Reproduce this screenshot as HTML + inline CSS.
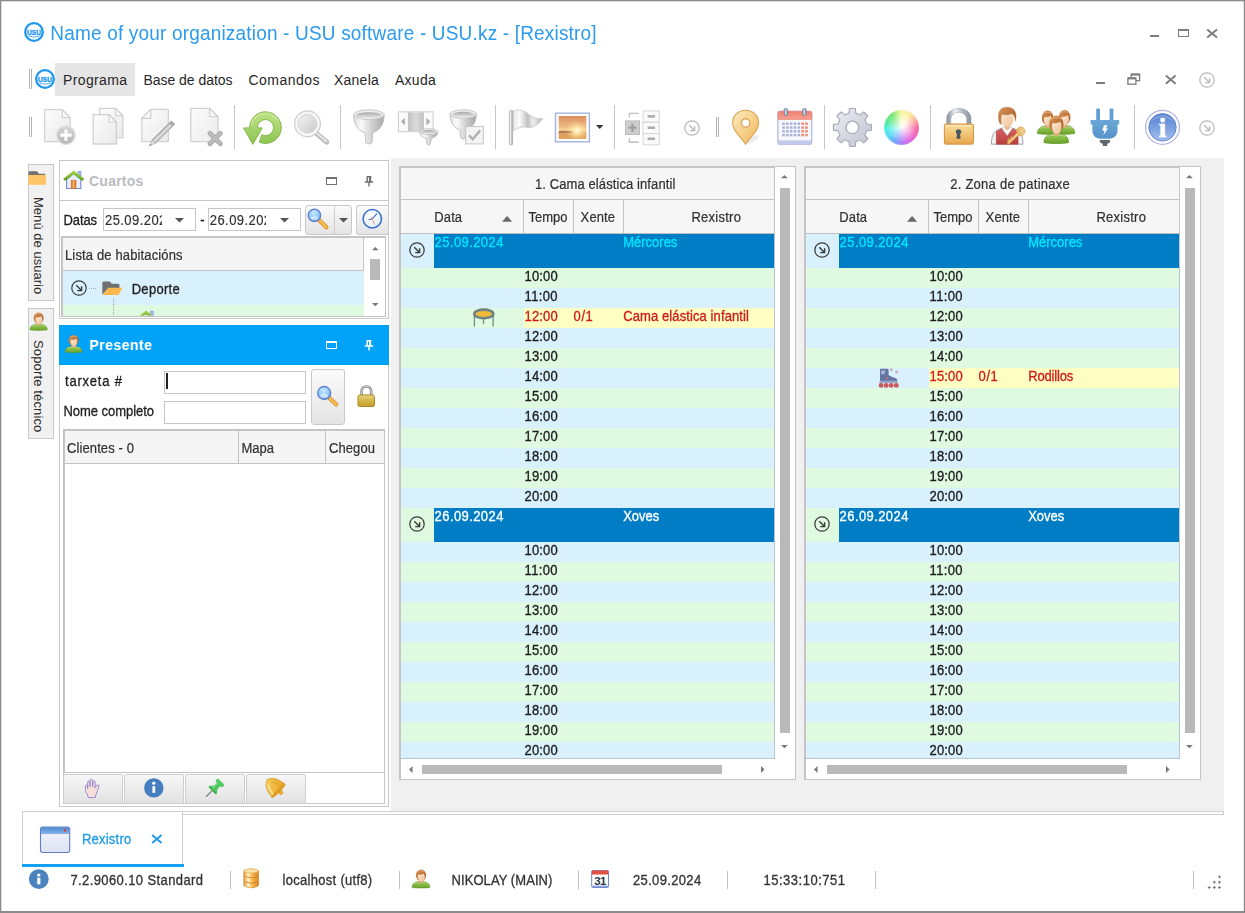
<!DOCTYPE html>
<html><head><meta charset="utf-8"><title>Rexistro</title>
<style>
html,body{margin:0;padding:0;background:#fff;overflow:hidden}
body{width:1245px;height:913px;position:relative;font-family:"Liberation Sans",sans-serif;font-size:13px}
#frame{position:absolute;left:0;top:0;width:1245px;height:913px;box-sizing:border-box;border:1px solid #8b8b8b;border-bottom-width:2px;box-shadow:inset 1px 1px 0 rgba(0,0,0,0.13),inset -1px 0 0 rgba(0,0,0,0.10);pointer-events:none}
svg{overflow:visible;display:block}
</style></head><body>
<div style="position:absolute;left:391px;top:158px;width:833px;height:653px;background:#f0f0f0"></div>
<svg style="position:absolute;left:23.799999999999997px;top:22.0px" width="20" height="20" viewBox="0 0 20 20"><circle cx="10" cy="10" r="8.8" fill="#fff" stroke="#1f97ef" stroke-width="2.3"/><text x="3.1" y="12.6" font-family="Liberation Sans" font-weight="bold" font-size="6.4" textLength="13.8" lengthAdjust="spacingAndGlyphs" fill="#1f97ef" stroke="#1f97ef" stroke-width="0.35">USU</text><path d="M4.4 14 Q10 16.4 15.6 14" stroke="#1f97ef" stroke-width="0.9" fill="none" opacity="0.85"/></svg>
<span id="title" style="position:absolute;left:50.3px;top:24.02px;font-size:19px;line-height:19px;color:#2a9bee;white-space:pre;letter-spacing:0.180px;transform:scaleY(1.09);transform-origin:0 84.65%;">Name of your organization - USU software - USU.kz - [Rexistro]</span>
<div style="position:absolute;left:1150px;top:35px;width:9px;height:2px;background:#7d7d7d"></div>
<div style="position:absolute;left:1177.5px;top:28.6px;width:9px;height:5px;border:1.3px solid #7d7d7d;border-top-width:2.6px"></div>
<svg style="position:absolute;left:1206px;top:28px" width="12" height="11" viewBox="0 0 12 11"><path d="M1.2 1.6 L11 9.6 M11 1.6 L1.2 9.6" stroke="#7d7d7d" stroke-width="2"/></svg>
<div style="position:absolute;left:1096px;top:82px;width:9px;height:2px;background:#7d7d7d"></div>
<svg style="position:absolute;left:1127px;top:73px" width="14" height="13" viewBox="0 0 14 13"><path d="M4.2 4.5 V1.2 H12.6 V7.6 H9" fill="none" stroke="#7d7d7d" stroke-width="1.3"/><path d="M4.2 1.6 H12.6" stroke="#7d7d7d" stroke-width="2"/><rect x="0.9" y="5" width="8" height="6.2" fill="#fff" stroke="#7d7d7d" stroke-width="1.3"/><path d="M0.9 5.4 H8.9" stroke="#7d7d7d" stroke-width="2"/></svg>
<svg style="position:absolute;left:1165px;top:74px" width="12" height="11" viewBox="0 0 12 11"><path d="M0.8 1.6 L10.6 9.8 M10.6 1.6 L0.8 9.8" stroke="#7d7d7d" stroke-width="1.9"/></svg>
<svg style="position:absolute;left:1199.0px;top:71.5px" width="16" height="16" viewBox="0 0 16 16"><circle cx="8" cy="8" r="7.2" fill="none" stroke="#b9b9b9" stroke-width="1.2"/><path d="M5.3 5.3 L10.2 10.2 M10.6 6.2 V10.6 H6.2" fill="none" stroke="#b9b9b9" stroke-width="1.4"/></svg>
<div style="position:absolute;left:29px;top:69px;width:1px;height:20px;background:#b4b4b4"></div><div style="position:absolute;left:31px;top:69px;width:1px;height:20px;background:#b4b4b4"></div>
<svg style="position:absolute;left:35.0px;top:69.0px" width="20" height="20" viewBox="0 0 20 20"><circle cx="10" cy="10" r="8.8" fill="#fff" stroke="#1f97ef" stroke-width="2.3"/><text x="3.1" y="12.6" font-family="Liberation Sans" font-weight="bold" font-size="6.4" textLength="13.8" lengthAdjust="spacingAndGlyphs" fill="#1f97ef" stroke="#1f97ef" stroke-width="0.35">USU</text><path d="M4.4 14 Q10 16.4 15.6 14" stroke="#1f97ef" stroke-width="0.9" fill="none" opacity="0.85"/></svg>
<div style="position:absolute;left:55px;top:63px;width:80px;height:33px;background:#e5e5e5"></div>
<span id="menu0" style="position:absolute;left:63.0px;top:72.75px;font-size:14px;line-height:14px;color:#262626;white-space:pre;letter-spacing:0.366px;">Programa</span>
<span id="menu1" style="position:absolute;left:143.5px;top:72.75px;font-size:14px;line-height:14px;color:#262626;white-space:pre;letter-spacing:-0.040px;">Base de datos</span>
<span id="menu2" style="position:absolute;left:248.5px;top:72.75px;font-size:14px;line-height:14px;color:#262626;white-space:pre;letter-spacing:0.475px;">Comandos</span>
<span id="menu3" style="position:absolute;left:334.0px;top:72.75px;font-size:14px;line-height:14px;color:#262626;white-space:pre;letter-spacing:0.234px;">Xanela</span>
<span id="menu4" style="position:absolute;left:395.0px;top:72.75px;font-size:14px;line-height:14px;color:#262626;white-space:pre;letter-spacing:0.259px;">Axuda</span>
<div style="position:absolute;left:29px;top:117px;width:1px;height:20px;background:#b4b4b4"></div><div style="position:absolute;left:31px;top:117px;width:1px;height:20px;background:#b4b4b4"></div>
<div style="position:absolute;left:234px;top:105px;width:1px;height:44px;background:#c6c6c6"></div>
<div style="position:absolute;left:340px;top:105px;width:1px;height:44px;background:#c6c6c6"></div>
<div style="position:absolute;left:495px;top:105px;width:1px;height:44px;background:#c6c6c6"></div>
<div style="position:absolute;left:614px;top:105px;width:1px;height:44px;background:#c6c6c6"></div>
<div style="position:absolute;left:824px;top:105px;width:1px;height:44px;background:#c6c6c6"></div>
<div style="position:absolute;left:930px;top:105px;width:1px;height:44px;background:#c6c6c6"></div>
<div style="position:absolute;left:1134px;top:105px;width:1px;height:44px;background:#c6c6c6"></div>
<svg style="position:absolute;left:683.5px;top:119.5px" width="16" height="16" viewBox="0 0 16 16"><circle cx="8" cy="8" r="7.2" fill="none" stroke="#b9b9b9" stroke-width="1.2"/><path d="M5.3 5.3 L10.2 10.2 M10.6 6.2 V10.6 H6.2" fill="none" stroke="#b9b9b9" stroke-width="1.4"/></svg>
<div style="position:absolute;left:716px;top:117px;width:1px;height:20px;background:#b4b4b4"></div><div style="position:absolute;left:718px;top:117px;width:1px;height:20px;background:#b4b4b4"></div>
<svg style="position:absolute;left:1199.0px;top:119.5px" width="16" height="16" viewBox="0 0 16 16"><circle cx="8" cy="8" r="7.2" fill="none" stroke="#b9b9b9" stroke-width="1.2"/><path d="M5.3 5.3 L10.2 10.2 M10.6 6.2 V10.6 H6.2" fill="none" stroke="#b9b9b9" stroke-width="1.4"/></svg>
<svg style="position:absolute;left:596px;top:125px" width="8" height="4" viewBox="0 0 8 4"><path d="M0 0 H7.4 L3.7 4 Z" fill="#333"/></svg>
<div style="position:absolute;left:28px;top:164px;width:26px;height:137px;border:1px solid #c9c9c9;background:#f1f1f1;box-sizing:border-box"></div>
<div style="position:absolute;left:28px;top:308px;width:26px;height:131px;border:1px solid #c9c9c9;background:#f1f1f1;box-sizing:border-box"></div>
<span id="vt0" style="position:absolute;left:31.1px;top:197.4px;width:15px;writing-mode:vertical-rl;font-size:13px;line-height:15px;color:#2b2b2b;white-space:pre;letter-spacing:0.030px;">Menú de usuario</span>
<span id="vt1" style="position:absolute;left:31.1px;top:340.3px;width:15px;writing-mode:vertical-rl;font-size:13px;line-height:15px;color:#2b2b2b;white-space:pre;letter-spacing:0.144px;">Soporte técnico</span>
<div style="position:absolute;left:59px;top:160px;width:330px;height:159px;border:1px solid #c8c8c8;background:#fff;box-sizing:border-box"></div>
<div style="position:absolute;left:60px;top:200px;width:328px;height:1px;background:#c8c8c8"></div>
<span id="cuartos" style="position:absolute;left:89.0px;top:174.35px;font-size:14px;line-height:14px;color:#b9bcc2;white-space:pre;font-weight:bold;letter-spacing:0.242px;">Cuartos</span>
<div style="position:absolute;left:326px;top:176.5px;width:9px;height:5px;border:1.3px solid #707070;border-top-width:2.4px"></div>
<svg style="position:absolute;left:363.5px;top:175.5px" width="10" height="11" viewBox="0 0 10 11"><path d="M2.6 0.7 H7.4 M3.2 0.7 V5.6 M6.4 0.7 V5.6 M0.8 6 H9.2 M5 6 V10.6" stroke="#707070" stroke-width="1.4" fill="none"/><rect x="5" y="1" width="1.6" height="4.6" fill="#707070"/></svg>
<span id="datas" style="position:absolute;left:63.5px;top:214.40px;font-size:13px;line-height:13px;color:#1f1f1f;white-space:pre;letter-spacing:-0.094px;transform:scaleY(1.07);transform-origin:0 84.65%;-webkit-text-stroke:0.3px #1f1f1f;">Datas</span>
<div style="position:absolute;left:103px;top:208px;width:93px;height:23px;border:1px solid #c6c6c6;background:#fff;box-sizing:border-box;overflow:hidden"><div style="position:absolute;left:0;top:0;width:57.5px;height:21px;overflow:hidden"><span id="d1" style="position:absolute;left:1.0px;top:5.00px;font-size:13px;line-height:13px;color:#303030;white-space:pre;letter-spacing:0.432px;transform:scaleY(1.07);transform-origin:0 84.65%;-webkit-text-stroke:0.15px #303030;">25.09.2024</span></div></div>
<svg style="position:absolute;left:175px;top:218px" width="9" height="4.5" viewBox="0 0 9 4.5"><path d="M0 0 H9 L4.5 4.5 Z" fill="#555"/></svg>
<span id="t11" style="position:absolute;left:200.3px;top:214.00px;font-size:13px;line-height:13px;color:#1f1f1f;white-space:pre;transform:scaleY(1.07);transform-origin:0 84.65%;-webkit-text-stroke:0.3px #1f1f1f;">-</span>
<div style="position:absolute;left:208px;top:208px;width:93px;height:23px;border:1px solid #c6c6c6;background:#fff;box-sizing:border-box;overflow:hidden"><div style="position:absolute;left:0;top:0;width:56.8px;height:21px;overflow:hidden"><span id="d2" style="position:absolute;left:0.8px;top:5.00px;font-size:13px;line-height:13px;color:#303030;white-space:pre;letter-spacing:0.432px;transform:scaleY(1.07);transform-origin:0 84.65%;-webkit-text-stroke:0.15px #303030;">26.09.2024</span></div></div>
<svg style="position:absolute;left:280px;top:218px" width="9" height="4.5" viewBox="0 0 9 4.5"><path d="M0 0 H9 L4.5 4.5 Z" fill="#555"/></svg>
<div style="position:absolute;left:304.5px;top:204.5px;width:47px;height:30.5px;border:1px solid #c9c9c9;border-radius:3px;background:linear-gradient(#fafafa,#e4e4e4);box-sizing:border-box"></div>
<div style="position:absolute;left:333.5px;top:205.5px;width:1px;height:28.5px;background:#cdcdcd"></div>
<svg style="position:absolute;left:338.5px;top:218px" width="9" height="4.5" viewBox="0 0 9 4.5"><path d="M0 0 H9 L4.5 4.5 Z" fill="#555"/></svg>
<div style="position:absolute;left:355.5px;top:204.5px;width:32px;height:30.5px;border:1px solid #c9c9c9;border-radius:3px;background:linear-gradient(#fafafa,#e4e4e4);box-sizing:border-box;border-right:none;border-radius:3px 0 0 3px"></div>
<div style="position:absolute;left:61px;top:236px;width:325px;height:80.5px;border:2px solid #c4c4c4;border-right-width:1px;border-bottom-width:1px;background:#fff;box-sizing:border-box"></div>
<div style="position:absolute;left:63px;top:238px;width:301px;height:33px;background:#f5f5f5;border-bottom:1px solid #c4c4c4;border-right:1px solid #c4c4c4;box-sizing:border-box"></div>
<span id="lista" style="position:absolute;left:65.0px;top:249.10px;font-size:13px;line-height:13px;color:#303030;white-space:pre;letter-spacing:0.139px;transform:scaleY(1.07);transform-origin:0 84.65%;-webkit-text-stroke:0.2px #303030;">Lista de habitacións</span>
<div style="position:absolute;left:63px;top:271px;width:301px;height:34px;background:#d9f0fd"></div>
<div style="position:absolute;left:63px;top:305px;width:301px;height:10.5px;background:#e0fae2"></div>
<svg style="position:absolute;left:71.2px;top:280.0px" width="16" height="16" viewBox="0 0 16 16"><circle cx="8" cy="8" r="7.2" fill="none" stroke="#3c3c3c" stroke-width="1.2"/><path d="M5.3 5.3 L10.2 10.2 M10.6 6.2 V10.6 H6.2" fill="none" stroke="#3c3c3c" stroke-width="1.4"/></svg>
<div style="position:absolute;left:89px;top:288px;width:8px;height:1px;background:repeating-linear-gradient(90deg,#b0b0b0 0 1px,transparent 1px 2px)"></div>
<div style="position:absolute;left:113px;top:298px;width:1px;height:18px;background:repeating-linear-gradient(#a8a8a8 0 1px,transparent 1px 2px)"></div>
<span id="deporte" style="position:absolute;left:131.7px;top:282.90px;font-size:13px;line-height:13px;color:#1f1f1f;white-space:pre;letter-spacing:0.293px;transform:scaleY(1.07);transform-origin:0 84.65%;-webkit-text-stroke:0.3px #1f1f1f;">Deporte</span>
<svg style="position:absolute;left:371.7px;top:247px" width="6.6" height="3.3" viewBox="0 0 6.6 3.3"><path d="M0 3.3 H6.6 L3.3 0 Z" fill="#777"/></svg>
<div style="position:absolute;left:370px;top:259px;width:10px;height:21px;background:#b9b9b9"></div>
<svg style="position:absolute;left:371.7px;top:302.8px" width="6.6" height="3.3" viewBox="0 0 6.6 3.3"><path d="M0 0 H6.6 L3.3 3.3 Z" fill="#777"/></svg>
<div style="position:absolute;left:59px;top:325px;width:330px;height:482px;border:1px solid #c8c8c8;border-top:none;background:#fff;box-sizing:border-box"></div>
<div style="position:absolute;left:59px;top:325px;width:330px;height:40px;background:#00a3f7"></div>
<span id="presente" style="position:absolute;left:89.3px;top:338.15px;font-size:14px;line-height:14px;color:#ffffff;white-space:pre;font-weight:bold;letter-spacing:0.480px;">Presente</span>
<div style="position:absolute;left:326px;top:341px;width:9px;height:5px;border:1.3px solid #fff;border-top-width:2.4px"></div>
<svg style="position:absolute;left:363.5px;top:339.8px" width="10" height="11" viewBox="0 0 10 11"><path d="M2.6 0.7 H7.4 M3.2 0.7 V5.6 M6.4 0.7 V5.6 M0.8 6 H9.2 M5 6 V10.6" stroke="#fff" stroke-width="1.4" fill="none"/><rect x="5" y="1" width="1.6" height="4.6" fill="#fff"/></svg>
<span id="tarx" style="position:absolute;left:65.0px;top:374.80px;font-size:13px;line-height:13px;color:#1f1f1f;white-space:pre;letter-spacing:0.790px;transform:scaleY(1.07);transform-origin:0 84.65%;-webkit-text-stroke:0.3px #1f1f1f;">tarxeta #</span>
<span id="nome" style="position:absolute;left:63.5px;top:405.00px;font-size:13px;line-height:13px;color:#1f1f1f;white-space:pre;letter-spacing:-0.042px;transform:scaleY(1.07);transform-origin:0 84.65%;-webkit-text-stroke:0.3px #1f1f1f;">Nome completo</span>
<div style="position:absolute;left:164px;top:370.5px;width:142px;height:23px;border:1px solid #c6c6c6;background:#fff;box-sizing:border-box"></div>
<div style="position:absolute;left:164px;top:400.5px;width:142px;height:23px;border:1px solid #c6c6c6;background:#fff;box-sizing:border-box"></div>
<div style="position:absolute;left:166.3px;top:373px;width:1.4px;height:16px;background:#222"></div>
<div style="position:absolute;left:310.5px;top:368.5px;width:34.5px;height:56.5px;border:1px solid #c9c9c9;border-radius:3px;background:linear-gradient(#fafafa,#e4e4e4);box-sizing:border-box"></div>
<div style="position:absolute;left:63px;top:429px;width:322px;height:344px;border:2px solid #c4c4c4;border-right-width:1px;border-bottom-width:1px;background:#fff;box-sizing:border-box"></div>
<div style="position:absolute;left:65px;top:431px;width:319px;height:33px;background:#f5f5f5;border-bottom:1px solid #c4c4c4;box-sizing:border-box"></div>
<div style="position:absolute;left:238px;top:431px;width:1px;height:33px;background:#c4c4c4"></div>
<div style="position:absolute;left:325px;top:431px;width:1px;height:33px;background:#c4c4c4"></div>
<span id="cli" style="position:absolute;left:67.0px;top:441.70px;font-size:13px;line-height:13px;color:#303030;white-space:pre;letter-spacing:0.104px;transform:scaleY(1.07);transform-origin:0 84.65%;-webkit-text-stroke:0.2px #303030;">Clientes - 0</span>
<span id="mapa" style="position:absolute;left:241.4px;top:441.70px;font-size:13px;line-height:13px;color:#303030;white-space:pre;letter-spacing:0.017px;transform:scaleY(1.07);transform-origin:0 84.65%;-webkit-text-stroke:0.2px #303030;">Mapa</span>
<span id="cheg" style="position:absolute;left:329.0px;top:441.70px;font-size:13px;line-height:13px;color:#303030;white-space:pre;letter-spacing:0.076px;transform:scaleY(1.07);transform-origin:0 84.65%;-webkit-text-stroke:0.2px #303030;">Chegou</span>
<div style="position:absolute;left:63px;top:773px;width:322px;height:31px;border:1px solid #c8c8c8;border-top:none;background:#fff;box-sizing:border-box"></div>
<div style="position:absolute;left:63px;top:773.5px;width:60px;height:30px;border:1px solid #cfcfcf;border-radius:2px;background:linear-gradient(#f6f6f6,#e2e2e2);box-sizing:border-box"></div>
<div style="position:absolute;left:124px;top:773.5px;width:60px;height:30px;border:1px solid #cfcfcf;border-radius:2px;background:linear-gradient(#f6f6f6,#e2e2e2);box-sizing:border-box"></div>
<div style="position:absolute;left:185px;top:773.5px;width:60px;height:30px;border:1px solid #cfcfcf;border-radius:2px;background:linear-gradient(#f6f6f6,#e2e2e2);box-sizing:border-box"></div>
<div style="position:absolute;left:246px;top:773.5px;width:60px;height:30px;border:1px solid #cfcfcf;border-radius:2px;background:linear-gradient(#f6f6f6,#e2e2e2);box-sizing:border-box"></div>
<div style="position:absolute;left:399px;top:166px;width:397px;height:614px;border:1px solid #c4c4c4;border-left-width:2px;background:#fff;box-sizing:border-box"></div>
<div style="position:absolute;left:401px;top:167px;width:374px;height:1px;background:#c4c4c4"></div>
<div style="position:absolute;left:401px;top:168px;width:374px;height:66px;background:#f6f6f6;border-right:1px solid #c4c4c4;border-bottom:1px solid #bdbdbd;box-sizing:border-box"></div>
<div style="position:absolute;left:401px;top:199px;width:373px;height:1px;background:#c4c4c4"></div>
<div style="position:absolute;left:523px;top:200px;width:1px;height:33px;background:#c4c4c4"></div>
<div style="position:absolute;left:573px;top:200px;width:1px;height:33px;background:#c4c4c4"></div>
<div style="position:absolute;left:623px;top:200px;width:1px;height:33px;background:#c4c4c4"></div>
<span id="aband" style="position:absolute;left:535.0px;top:177.70px;font-size:13px;line-height:13px;color:#303030;white-space:pre;letter-spacing:0.095px;transform:scaleY(1.07);transform-origin:0 84.65%;-webkit-text-stroke:0.2px #303030;">1. Cama elástica infantil</span>
<span id="ah0" style="position:absolute;left:434.3px;top:211.40px;font-size:13px;line-height:13px;color:#303030;white-space:pre;letter-spacing:0.108px;transform:scaleY(1.07);transform-origin:0 84.65%;-webkit-text-stroke:0.2px #303030;">Data</span>
<svg style="position:absolute;left:501.7px;top:215.8px" width="10.2" height="5.8" viewBox="0 0 10.2 5.8"><path d="M0 5.8 H10.2 L5.1 0 Z" fill="#6a6a6a"/></svg>
<span id="ah1" style="position:absolute;left:528.5px;top:211.40px;font-size:13px;line-height:13px;color:#303030;white-space:pre;letter-spacing:-0.026px;transform:scaleY(1.07);transform-origin:0 84.65%;-webkit-text-stroke:0.2px #303030;">Tempo</span>
<span id="ah2" style="position:absolute;left:580.6px;top:211.40px;font-size:13px;line-height:13px;color:#303030;white-space:pre;letter-spacing:0.123px;transform:scaleY(1.07);transform-origin:0 84.65%;-webkit-text-stroke:0.2px #303030;">Xente</span>
<span id="ah3" style="position:absolute;left:691.4px;top:211.40px;font-size:13px;line-height:13px;color:#303030;white-space:pre;letter-spacing:0.264px;transform:scaleY(1.07);transform-origin:0 84.65%;-webkit-text-stroke:0.2px #303030;">Rexistro</span>
<div style="position:absolute;left:401px;top:233.6px;width:373px;height:524.6px;overflow:hidden;border-right:1px solid #b9c6cf;border-bottom:1px solid #b9c6cf"><div style="position:absolute;left:0px;top:0px;width:373px;height:34px;background:#d9f0fd"></div><div style="position:absolute;left:33px;top:0px;width:340px;height:34px;background:#007dc5"></div><svg style="position:absolute;left:8.2px;top:8.7px" width="16" height="16" viewBox="0 0 16 16"><circle cx="8" cy="8" r="7.2" fill="none" stroke="#3a3a3a" stroke-width="1.25"/><path d="M5.3 5.3 L10.2 10.2 M10.6 6.2 V10.6 H6.2" fill="none" stroke="#3a3a3a" stroke-width="1.45"/></svg><span id="ag0d" style="position:absolute;left:33.6px;top:2.60px;font-size:13px;line-height:13px;color:#00e6ff;white-space:pre;letter-spacing:0.412px;transform:scaleY(1.07);transform-origin:0 84.65%;-webkit-text-stroke:0.3px #00e6ff;">25.09.2024</span><span id="ag0w" style="position:absolute;left:222.2px;top:2.60px;font-size:13px;line-height:13px;color:#00e6ff;white-space:pre;transform:scaleY(1.07);transform-origin:0 84.65%;-webkit-text-stroke:0.3px #00e6ff;">Mércores</span><div style="position:absolute;left:0px;top:34px;width:373px;height:20px;background:#e0fae2"></div><span id="ar1" style="position:absolute;left:123.5px;top:36.20px;font-size:13px;line-height:13px;color:#1b1b1b;white-space:pre;letter-spacing:0.171px;transform:scaleY(1.07);transform-origin:0 84.65%;-webkit-text-stroke:0.3px #1b1b1b;">10:00</span><div style="position:absolute;left:0px;top:54px;width:373px;height:20px;background:#d9f0fd"></div><span id="ar2" style="position:absolute;left:123.5px;top:56.20px;font-size:13px;line-height:13px;color:#1b1b1b;white-space:pre;letter-spacing:0.364px;transform:scaleY(1.07);transform-origin:0 84.65%;-webkit-text-stroke:0.3px #1b1b1b;">11:00</span><div style="position:absolute;left:0px;top:74px;width:373px;height:20px;background:#e0fae2"></div><div style="position:absolute;left:122.6px;top:74px;width:250.4px;height:20px;background:#ffffc3"></div><span id="asx" style="position:absolute;left:172.6px;top:76.20px;font-size:13px;line-height:13px;color:#cf1b1b;white-space:pre;letter-spacing:0.574px;transform:scaleY(1.07);transform-origin:0 84.65%;-webkit-text-stroke:0.3px #cf1b1b;">0/1</span><span id="ast" style="position:absolute;left:222.2px;top:76.20px;font-size:13px;line-height:13px;color:#cf1b1b;white-space:pre;letter-spacing:0.102px;transform:scaleY(1.07);transform-origin:0 84.65%;-webkit-text-stroke:0.3px #cf1b1b;">Cama elástica infantil</span><span id="ar3" style="position:absolute;left:123.5px;top:76.20px;font-size:13px;line-height:13px;color:#cf1b1b;white-space:pre;letter-spacing:0.171px;transform:scaleY(1.07);transform-origin:0 84.65%;-webkit-text-stroke:0.3px #cf1b1b;">12:00</span><div style="position:absolute;left:0px;top:94px;width:373px;height:20px;background:#d9f0fd"></div><span id="ar4" style="position:absolute;left:123.5px;top:96.20px;font-size:13px;line-height:13px;color:#1b1b1b;white-space:pre;letter-spacing:0.171px;transform:scaleY(1.07);transform-origin:0 84.65%;-webkit-text-stroke:0.3px #1b1b1b;">12:00</span><div style="position:absolute;left:0px;top:114px;width:373px;height:20px;background:#e0fae2"></div><span id="ar5" style="position:absolute;left:123.5px;top:116.20px;font-size:13px;line-height:13px;color:#1b1b1b;white-space:pre;letter-spacing:0.171px;transform:scaleY(1.07);transform-origin:0 84.65%;-webkit-text-stroke:0.3px #1b1b1b;">13:00</span><div style="position:absolute;left:0px;top:134px;width:373px;height:20px;background:#d9f0fd"></div><span id="ar6" style="position:absolute;left:123.5px;top:136.20px;font-size:13px;line-height:13px;color:#1b1b1b;white-space:pre;letter-spacing:0.171px;transform:scaleY(1.07);transform-origin:0 84.65%;-webkit-text-stroke:0.3px #1b1b1b;">14:00</span><div style="position:absolute;left:0px;top:154px;width:373px;height:20px;background:#e0fae2"></div><span id="ar7" style="position:absolute;left:123.5px;top:156.20px;font-size:13px;line-height:13px;color:#1b1b1b;white-space:pre;letter-spacing:0.171px;transform:scaleY(1.07);transform-origin:0 84.65%;-webkit-text-stroke:0.3px #1b1b1b;">15:00</span><div style="position:absolute;left:0px;top:174px;width:373px;height:20px;background:#d9f0fd"></div><span id="ar8" style="position:absolute;left:123.5px;top:176.20px;font-size:13px;line-height:13px;color:#1b1b1b;white-space:pre;letter-spacing:0.171px;transform:scaleY(1.07);transform-origin:0 84.65%;-webkit-text-stroke:0.3px #1b1b1b;">16:00</span><div style="position:absolute;left:0px;top:194px;width:373px;height:20px;background:#e0fae2"></div><span id="ar9" style="position:absolute;left:123.5px;top:196.20px;font-size:13px;line-height:13px;color:#1b1b1b;white-space:pre;letter-spacing:0.171px;transform:scaleY(1.07);transform-origin:0 84.65%;-webkit-text-stroke:0.3px #1b1b1b;">17:00</span><div style="position:absolute;left:0px;top:214px;width:373px;height:20px;background:#d9f0fd"></div><span id="ar10" style="position:absolute;left:123.5px;top:216.20px;font-size:13px;line-height:13px;color:#1b1b1b;white-space:pre;letter-spacing:0.171px;transform:scaleY(1.07);transform-origin:0 84.65%;-webkit-text-stroke:0.3px #1b1b1b;">18:00</span><div style="position:absolute;left:0px;top:234px;width:373px;height:20px;background:#e0fae2"></div><span id="ar11" style="position:absolute;left:123.5px;top:236.20px;font-size:13px;line-height:13px;color:#1b1b1b;white-space:pre;letter-spacing:0.171px;transform:scaleY(1.07);transform-origin:0 84.65%;-webkit-text-stroke:0.3px #1b1b1b;">19:00</span><div style="position:absolute;left:0px;top:254px;width:373px;height:20px;background:#d9f0fd"></div><span id="ar12" style="position:absolute;left:123.5px;top:256.20px;font-size:13px;line-height:13px;color:#1b1b1b;white-space:pre;letter-spacing:0.171px;transform:scaleY(1.07);transform-origin:0 84.65%;-webkit-text-stroke:0.3px #1b1b1b;">20:00</span><div style="position:absolute;left:0px;top:274px;width:373px;height:34px;background:#e0fae2"></div><div style="position:absolute;left:33px;top:274px;width:340px;height:34px;background:#007dc5"></div><svg style="position:absolute;left:8.2px;top:282.7px" width="16" height="16" viewBox="0 0 16 16"><circle cx="8" cy="8" r="7.2" fill="none" stroke="#3a3a3a" stroke-width="1.25"/><path d="M5.3 5.3 L10.2 10.2 M10.6 6.2 V10.6 H6.2" fill="none" stroke="#3a3a3a" stroke-width="1.45"/></svg><span id="ag13d" style="position:absolute;left:33.6px;top:276.60px;font-size:13px;line-height:13px;color:#ffffff;white-space:pre;letter-spacing:0.412px;transform:scaleY(1.07);transform-origin:0 84.65%;-webkit-text-stroke:0.3px #ffffff;">26.09.2024</span><span id="ag13w" style="position:absolute;left:222.2px;top:276.60px;font-size:13px;line-height:13px;color:#ffffff;white-space:pre;transform:scaleY(1.07);transform-origin:0 84.65%;-webkit-text-stroke:0.3px #ffffff;">Xoves</span><div style="position:absolute;left:0px;top:308px;width:373px;height:20px;background:#d9f0fd"></div><span id="ar14" style="position:absolute;left:123.5px;top:310.20px;font-size:13px;line-height:13px;color:#1b1b1b;white-space:pre;letter-spacing:0.171px;transform:scaleY(1.07);transform-origin:0 84.65%;-webkit-text-stroke:0.3px #1b1b1b;">10:00</span><div style="position:absolute;left:0px;top:328px;width:373px;height:20px;background:#e0fae2"></div><span id="ar15" style="position:absolute;left:123.5px;top:330.20px;font-size:13px;line-height:13px;color:#1b1b1b;white-space:pre;letter-spacing:0.364px;transform:scaleY(1.07);transform-origin:0 84.65%;-webkit-text-stroke:0.3px #1b1b1b;">11:00</span><div style="position:absolute;left:0px;top:348px;width:373px;height:20px;background:#d9f0fd"></div><span id="ar16" style="position:absolute;left:123.5px;top:350.20px;font-size:13px;line-height:13px;color:#1b1b1b;white-space:pre;letter-spacing:0.171px;transform:scaleY(1.07);transform-origin:0 84.65%;-webkit-text-stroke:0.3px #1b1b1b;">12:00</span><div style="position:absolute;left:0px;top:368px;width:373px;height:20px;background:#e0fae2"></div><span id="ar17" style="position:absolute;left:123.5px;top:370.20px;font-size:13px;line-height:13px;color:#1b1b1b;white-space:pre;letter-spacing:0.171px;transform:scaleY(1.07);transform-origin:0 84.65%;-webkit-text-stroke:0.3px #1b1b1b;">13:00</span><div style="position:absolute;left:0px;top:388px;width:373px;height:20px;background:#d9f0fd"></div><span id="ar18" style="position:absolute;left:123.5px;top:390.20px;font-size:13px;line-height:13px;color:#1b1b1b;white-space:pre;letter-spacing:0.171px;transform:scaleY(1.07);transform-origin:0 84.65%;-webkit-text-stroke:0.3px #1b1b1b;">14:00</span><div style="position:absolute;left:0px;top:408px;width:373px;height:20px;background:#e0fae2"></div><span id="ar19" style="position:absolute;left:123.5px;top:410.20px;font-size:13px;line-height:13px;color:#1b1b1b;white-space:pre;letter-spacing:0.171px;transform:scaleY(1.07);transform-origin:0 84.65%;-webkit-text-stroke:0.3px #1b1b1b;">15:00</span><div style="position:absolute;left:0px;top:428px;width:373px;height:20px;background:#d9f0fd"></div><span id="ar20" style="position:absolute;left:123.5px;top:430.20px;font-size:13px;line-height:13px;color:#1b1b1b;white-space:pre;letter-spacing:0.171px;transform:scaleY(1.07);transform-origin:0 84.65%;-webkit-text-stroke:0.3px #1b1b1b;">16:00</span><div style="position:absolute;left:0px;top:448px;width:373px;height:20px;background:#e0fae2"></div><span id="ar21" style="position:absolute;left:123.5px;top:450.20px;font-size:13px;line-height:13px;color:#1b1b1b;white-space:pre;letter-spacing:0.171px;transform:scaleY(1.07);transform-origin:0 84.65%;-webkit-text-stroke:0.3px #1b1b1b;">17:00</span><div style="position:absolute;left:0px;top:468px;width:373px;height:20px;background:#d9f0fd"></div><span id="ar22" style="position:absolute;left:123.5px;top:470.20px;font-size:13px;line-height:13px;color:#1b1b1b;white-space:pre;letter-spacing:0.171px;transform:scaleY(1.07);transform-origin:0 84.65%;-webkit-text-stroke:0.3px #1b1b1b;">18:00</span><div style="position:absolute;left:0px;top:488px;width:373px;height:20px;background:#e0fae2"></div><span id="ar23" style="position:absolute;left:123.5px;top:490.20px;font-size:13px;line-height:13px;color:#1b1b1b;white-space:pre;letter-spacing:0.171px;transform:scaleY(1.07);transform-origin:0 84.65%;-webkit-text-stroke:0.3px #1b1b1b;">19:00</span><div style="position:absolute;left:0px;top:508px;width:373px;height:20px;background:#d9f0fd"></div><span id="ar24" style="position:absolute;left:123.5px;top:510.20px;font-size:13px;line-height:13px;color:#1b1b1b;white-space:pre;letter-spacing:0.171px;transform:scaleY(1.07);transform-origin:0 84.65%;-webkit-text-stroke:0.3px #1b1b1b;">20:00</span></div>
<svg style="position:absolute;left:781.4px;top:175.2px" width="6.8" height="3.3" viewBox="0 0 6.8 3.3"><path d="M0 3.3 H6.8 L3.4 0 Z" fill="#777"/></svg>
<div style="position:absolute;left:780.4px;top:188px;width:9.2px;height:544.5px;background:#b9b9b9"></div>
<svg style="position:absolute;left:781.4px;top:745.2px" width="6.8" height="3.3" viewBox="0 0 6.8 3.3"><path d="M0 0 H6.8 L3.4 3.3 Z" fill="#777"/></svg>
<svg style="position:absolute;left:409.3px;top:765.6px" width="3.5" height="7" viewBox="0 0 3.5 7"><path d="M3.5 0 V7 L0 3.5 Z" fill="#777"/></svg>
<div style="position:absolute;left:421.6px;top:764.5px;width:300.4px;height:9.2px;background:#b9b9b9"></div>
<svg style="position:absolute;left:761px;top:765.6px" width="3.5" height="7" viewBox="0 0 3.5 7"><path d="M0 0 V7 L3.5 3.5 Z" fill="#777"/></svg>
<div style="position:absolute;left:804px;top:166px;width:397px;height:614px;border:1px solid #c4c4c4;border-left-width:2px;background:#fff;box-sizing:border-box"></div>
<div style="position:absolute;left:806px;top:167px;width:374px;height:1px;background:#c4c4c4"></div>
<div style="position:absolute;left:806px;top:168px;width:374px;height:66px;background:#f6f6f6;border-right:1px solid #c4c4c4;border-bottom:1px solid #bdbdbd;box-sizing:border-box"></div>
<div style="position:absolute;left:806px;top:199px;width:373px;height:1px;background:#c4c4c4"></div>
<div style="position:absolute;left:928px;top:200px;width:1px;height:33px;background:#c4c4c4"></div>
<div style="position:absolute;left:978px;top:200px;width:1px;height:33px;background:#c4c4c4"></div>
<div style="position:absolute;left:1028px;top:200px;width:1px;height:33px;background:#c4c4c4"></div>
<span id="bband" style="position:absolute;left:950.2px;top:177.70px;font-size:13px;line-height:13px;color:#303030;white-space:pre;letter-spacing:0.257px;transform:scaleY(1.07);transform-origin:0 84.65%;-webkit-text-stroke:0.2px #303030;">2. Zona de patinaxe</span>
<span id="bh0" style="position:absolute;left:839.3px;top:211.40px;font-size:13px;line-height:13px;color:#303030;white-space:pre;letter-spacing:0.108px;transform:scaleY(1.07);transform-origin:0 84.65%;-webkit-text-stroke:0.2px #303030;">Data</span>
<svg style="position:absolute;left:906.7px;top:215.8px" width="10.2" height="5.8" viewBox="0 0 10.2 5.8"><path d="M0 5.8 H10.2 L5.1 0 Z" fill="#6a6a6a"/></svg>
<span id="bh1" style="position:absolute;left:933.5px;top:211.40px;font-size:13px;line-height:13px;color:#303030;white-space:pre;letter-spacing:-0.026px;transform:scaleY(1.07);transform-origin:0 84.65%;-webkit-text-stroke:0.2px #303030;">Tempo</span>
<span id="bh2" style="position:absolute;left:985.6px;top:211.40px;font-size:13px;line-height:13px;color:#303030;white-space:pre;letter-spacing:0.123px;transform:scaleY(1.07);transform-origin:0 84.65%;-webkit-text-stroke:0.2px #303030;">Xente</span>
<span id="bh3" style="position:absolute;left:1096.4px;top:211.40px;font-size:13px;line-height:13px;color:#303030;white-space:pre;letter-spacing:0.264px;transform:scaleY(1.07);transform-origin:0 84.65%;-webkit-text-stroke:0.2px #303030;">Rexistro</span>
<div style="position:absolute;left:806px;top:233.6px;width:373px;height:524.6px;overflow:hidden;border-right:1px solid #b9c6cf;border-bottom:1px solid #b9c6cf"><div style="position:absolute;left:0px;top:0px;width:373px;height:34px;background:#d9f0fd"></div><div style="position:absolute;left:33px;top:0px;width:340px;height:34px;background:#007dc5"></div><svg style="position:absolute;left:8.2px;top:8.7px" width="16" height="16" viewBox="0 0 16 16"><circle cx="8" cy="8" r="7.2" fill="none" stroke="#3a3a3a" stroke-width="1.25"/><path d="M5.3 5.3 L10.2 10.2 M10.6 6.2 V10.6 H6.2" fill="none" stroke="#3a3a3a" stroke-width="1.45"/></svg><span id="bg0d" style="position:absolute;left:33.6px;top:2.60px;font-size:13px;line-height:13px;color:#00e6ff;white-space:pre;letter-spacing:0.412px;transform:scaleY(1.07);transform-origin:0 84.65%;-webkit-text-stroke:0.3px #00e6ff;">25.09.2024</span><span id="bg0w" style="position:absolute;left:222.2px;top:2.60px;font-size:13px;line-height:13px;color:#00e6ff;white-space:pre;transform:scaleY(1.07);transform-origin:0 84.65%;-webkit-text-stroke:0.3px #00e6ff;">Mércores</span><div style="position:absolute;left:0px;top:34px;width:373px;height:20px;background:#e0fae2"></div><span id="br1" style="position:absolute;left:123.5px;top:36.20px;font-size:13px;line-height:13px;color:#1b1b1b;white-space:pre;letter-spacing:0.171px;transform:scaleY(1.07);transform-origin:0 84.65%;-webkit-text-stroke:0.3px #1b1b1b;">10:00</span><div style="position:absolute;left:0px;top:54px;width:373px;height:20px;background:#d9f0fd"></div><span id="br2" style="position:absolute;left:123.5px;top:56.20px;font-size:13px;line-height:13px;color:#1b1b1b;white-space:pre;letter-spacing:0.364px;transform:scaleY(1.07);transform-origin:0 84.65%;-webkit-text-stroke:0.3px #1b1b1b;">11:00</span><div style="position:absolute;left:0px;top:74px;width:373px;height:20px;background:#e0fae2"></div><span id="br3" style="position:absolute;left:123.5px;top:76.20px;font-size:13px;line-height:13px;color:#1b1b1b;white-space:pre;letter-spacing:0.171px;transform:scaleY(1.07);transform-origin:0 84.65%;-webkit-text-stroke:0.3px #1b1b1b;">12:00</span><div style="position:absolute;left:0px;top:94px;width:373px;height:20px;background:#d9f0fd"></div><span id="br4" style="position:absolute;left:123.5px;top:96.20px;font-size:13px;line-height:13px;color:#1b1b1b;white-space:pre;letter-spacing:0.171px;transform:scaleY(1.07);transform-origin:0 84.65%;-webkit-text-stroke:0.3px #1b1b1b;">13:00</span><div style="position:absolute;left:0px;top:114px;width:373px;height:20px;background:#e0fae2"></div><span id="br5" style="position:absolute;left:123.5px;top:116.20px;font-size:13px;line-height:13px;color:#1b1b1b;white-space:pre;letter-spacing:0.171px;transform:scaleY(1.07);transform-origin:0 84.65%;-webkit-text-stroke:0.3px #1b1b1b;">14:00</span><div style="position:absolute;left:0px;top:134px;width:373px;height:20px;background:#d9f0fd"></div><div style="position:absolute;left:122.6px;top:134px;width:250.4px;height:20px;background:#ffffc3"></div><span id="bsx" style="position:absolute;left:172.6px;top:136.20px;font-size:13px;line-height:13px;color:#cf1b1b;white-space:pre;letter-spacing:0.574px;transform:scaleY(1.07);transform-origin:0 84.65%;-webkit-text-stroke:0.3px #cf1b1b;">0/1</span><span id="bst" style="position:absolute;left:222.2px;top:136.20px;font-size:13px;line-height:13px;color:#cf1b1b;white-space:pre;letter-spacing:-0.156px;transform:scaleY(1.07);transform-origin:0 84.65%;-webkit-text-stroke:0.3px #cf1b1b;">Rodillos</span><span id="br6" style="position:absolute;left:123.5px;top:136.20px;font-size:13px;line-height:13px;color:#cf1b1b;white-space:pre;letter-spacing:0.171px;transform:scaleY(1.07);transform-origin:0 84.65%;-webkit-text-stroke:0.3px #cf1b1b;">15:00</span><div style="position:absolute;left:0px;top:154px;width:373px;height:20px;background:#e0fae2"></div><span id="br7" style="position:absolute;left:123.5px;top:156.20px;font-size:13px;line-height:13px;color:#1b1b1b;white-space:pre;letter-spacing:0.171px;transform:scaleY(1.07);transform-origin:0 84.65%;-webkit-text-stroke:0.3px #1b1b1b;">15:00</span><div style="position:absolute;left:0px;top:174px;width:373px;height:20px;background:#d9f0fd"></div><span id="br8" style="position:absolute;left:123.5px;top:176.20px;font-size:13px;line-height:13px;color:#1b1b1b;white-space:pre;letter-spacing:0.171px;transform:scaleY(1.07);transform-origin:0 84.65%;-webkit-text-stroke:0.3px #1b1b1b;">16:00</span><div style="position:absolute;left:0px;top:194px;width:373px;height:20px;background:#e0fae2"></div><span id="br9" style="position:absolute;left:123.5px;top:196.20px;font-size:13px;line-height:13px;color:#1b1b1b;white-space:pre;letter-spacing:0.171px;transform:scaleY(1.07);transform-origin:0 84.65%;-webkit-text-stroke:0.3px #1b1b1b;">17:00</span><div style="position:absolute;left:0px;top:214px;width:373px;height:20px;background:#d9f0fd"></div><span id="br10" style="position:absolute;left:123.5px;top:216.20px;font-size:13px;line-height:13px;color:#1b1b1b;white-space:pre;letter-spacing:0.171px;transform:scaleY(1.07);transform-origin:0 84.65%;-webkit-text-stroke:0.3px #1b1b1b;">18:00</span><div style="position:absolute;left:0px;top:234px;width:373px;height:20px;background:#e0fae2"></div><span id="br11" style="position:absolute;left:123.5px;top:236.20px;font-size:13px;line-height:13px;color:#1b1b1b;white-space:pre;letter-spacing:0.171px;transform:scaleY(1.07);transform-origin:0 84.65%;-webkit-text-stroke:0.3px #1b1b1b;">19:00</span><div style="position:absolute;left:0px;top:254px;width:373px;height:20px;background:#d9f0fd"></div><span id="br12" style="position:absolute;left:123.5px;top:256.20px;font-size:13px;line-height:13px;color:#1b1b1b;white-space:pre;letter-spacing:0.171px;transform:scaleY(1.07);transform-origin:0 84.65%;-webkit-text-stroke:0.3px #1b1b1b;">20:00</span><div style="position:absolute;left:0px;top:274px;width:373px;height:34px;background:#e0fae2"></div><div style="position:absolute;left:33px;top:274px;width:340px;height:34px;background:#007dc5"></div><svg style="position:absolute;left:8.2px;top:282.7px" width="16" height="16" viewBox="0 0 16 16"><circle cx="8" cy="8" r="7.2" fill="none" stroke="#3a3a3a" stroke-width="1.25"/><path d="M5.3 5.3 L10.2 10.2 M10.6 6.2 V10.6 H6.2" fill="none" stroke="#3a3a3a" stroke-width="1.45"/></svg><span id="bg13d" style="position:absolute;left:33.6px;top:276.60px;font-size:13px;line-height:13px;color:#ffffff;white-space:pre;letter-spacing:0.412px;transform:scaleY(1.07);transform-origin:0 84.65%;-webkit-text-stroke:0.3px #ffffff;">26.09.2024</span><span id="bg13w" style="position:absolute;left:222.2px;top:276.60px;font-size:13px;line-height:13px;color:#ffffff;white-space:pre;transform:scaleY(1.07);transform-origin:0 84.65%;-webkit-text-stroke:0.3px #ffffff;">Xoves</span><div style="position:absolute;left:0px;top:308px;width:373px;height:20px;background:#d9f0fd"></div><span id="br14" style="position:absolute;left:123.5px;top:310.20px;font-size:13px;line-height:13px;color:#1b1b1b;white-space:pre;letter-spacing:0.171px;transform:scaleY(1.07);transform-origin:0 84.65%;-webkit-text-stroke:0.3px #1b1b1b;">10:00</span><div style="position:absolute;left:0px;top:328px;width:373px;height:20px;background:#e0fae2"></div><span id="br15" style="position:absolute;left:123.5px;top:330.20px;font-size:13px;line-height:13px;color:#1b1b1b;white-space:pre;letter-spacing:0.364px;transform:scaleY(1.07);transform-origin:0 84.65%;-webkit-text-stroke:0.3px #1b1b1b;">11:00</span><div style="position:absolute;left:0px;top:348px;width:373px;height:20px;background:#d9f0fd"></div><span id="br16" style="position:absolute;left:123.5px;top:350.20px;font-size:13px;line-height:13px;color:#1b1b1b;white-space:pre;letter-spacing:0.171px;transform:scaleY(1.07);transform-origin:0 84.65%;-webkit-text-stroke:0.3px #1b1b1b;">12:00</span><div style="position:absolute;left:0px;top:368px;width:373px;height:20px;background:#e0fae2"></div><span id="br17" style="position:absolute;left:123.5px;top:370.20px;font-size:13px;line-height:13px;color:#1b1b1b;white-space:pre;letter-spacing:0.171px;transform:scaleY(1.07);transform-origin:0 84.65%;-webkit-text-stroke:0.3px #1b1b1b;">13:00</span><div style="position:absolute;left:0px;top:388px;width:373px;height:20px;background:#d9f0fd"></div><span id="br18" style="position:absolute;left:123.5px;top:390.20px;font-size:13px;line-height:13px;color:#1b1b1b;white-space:pre;letter-spacing:0.171px;transform:scaleY(1.07);transform-origin:0 84.65%;-webkit-text-stroke:0.3px #1b1b1b;">14:00</span><div style="position:absolute;left:0px;top:408px;width:373px;height:20px;background:#e0fae2"></div><span id="br19" style="position:absolute;left:123.5px;top:410.20px;font-size:13px;line-height:13px;color:#1b1b1b;white-space:pre;letter-spacing:0.171px;transform:scaleY(1.07);transform-origin:0 84.65%;-webkit-text-stroke:0.3px #1b1b1b;">15:00</span><div style="position:absolute;left:0px;top:428px;width:373px;height:20px;background:#d9f0fd"></div><span id="br20" style="position:absolute;left:123.5px;top:430.20px;font-size:13px;line-height:13px;color:#1b1b1b;white-space:pre;letter-spacing:0.171px;transform:scaleY(1.07);transform-origin:0 84.65%;-webkit-text-stroke:0.3px #1b1b1b;">16:00</span><div style="position:absolute;left:0px;top:448px;width:373px;height:20px;background:#e0fae2"></div><span id="br21" style="position:absolute;left:123.5px;top:450.20px;font-size:13px;line-height:13px;color:#1b1b1b;white-space:pre;letter-spacing:0.171px;transform:scaleY(1.07);transform-origin:0 84.65%;-webkit-text-stroke:0.3px #1b1b1b;">17:00</span><div style="position:absolute;left:0px;top:468px;width:373px;height:20px;background:#d9f0fd"></div><span id="br22" style="position:absolute;left:123.5px;top:470.20px;font-size:13px;line-height:13px;color:#1b1b1b;white-space:pre;letter-spacing:0.171px;transform:scaleY(1.07);transform-origin:0 84.65%;-webkit-text-stroke:0.3px #1b1b1b;">18:00</span><div style="position:absolute;left:0px;top:488px;width:373px;height:20px;background:#e0fae2"></div><span id="br23" style="position:absolute;left:123.5px;top:490.20px;font-size:13px;line-height:13px;color:#1b1b1b;white-space:pre;letter-spacing:0.171px;transform:scaleY(1.07);transform-origin:0 84.65%;-webkit-text-stroke:0.3px #1b1b1b;">19:00</span><div style="position:absolute;left:0px;top:508px;width:373px;height:20px;background:#d9f0fd"></div><span id="br24" style="position:absolute;left:123.5px;top:510.20px;font-size:13px;line-height:13px;color:#1b1b1b;white-space:pre;letter-spacing:0.171px;transform:scaleY(1.07);transform-origin:0 84.65%;-webkit-text-stroke:0.3px #1b1b1b;">20:00</span></div>
<svg style="position:absolute;left:1186.4px;top:175.2px" width="6.8" height="3.3" viewBox="0 0 6.8 3.3"><path d="M0 3.3 H6.8 L3.4 0 Z" fill="#777"/></svg>
<div style="position:absolute;left:1185.4px;top:188px;width:9.2px;height:544.5px;background:#b9b9b9"></div>
<svg style="position:absolute;left:1186.4px;top:745.2px" width="6.8" height="3.3" viewBox="0 0 6.8 3.3"><path d="M0 0 H6.8 L3.4 3.3 Z" fill="#777"/></svg>
<svg style="position:absolute;left:814.3px;top:765.6px" width="3.5" height="7" viewBox="0 0 3.5 7"><path d="M3.5 0 V7 L0 3.5 Z" fill="#777"/></svg>
<div style="position:absolute;left:826.6px;top:764.5px;width:300.4px;height:9.2px;background:#b9b9b9"></div>
<svg style="position:absolute;left:1166px;top:765.6px" width="3.5" height="7" viewBox="0 0 3.5 7"><path d="M0 0 V7 L3.5 3.5 Z" fill="#777"/></svg>
<div style="position:absolute;left:183px;top:811px;width:1040px;height:3px;border:1px solid #d0d0d0;border-left:none;background:#fff;box-sizing:content-box;height:2px"></div>
<div style="position:absolute;left:22px;top:811px;width:161px;height:53px;border:1px solid #cfcfcf;border-bottom:none;background:#fff;box-sizing:border-box"></div>
<div style="position:absolute;left:22px;top:864px;width:162px;height:3px;background:#14a0f0"></div>
<span id="tabtxt" style="position:absolute;left:82.0px;top:832.70px;font-size:13px;line-height:13px;color:#1e9be8;white-space:pre;letter-spacing:0.214px;transform:scaleY(1.07);transform-origin:0 84.65%;-webkit-text-stroke:0.3px #1e9be8;">Rexistro</span>
<svg style="position:absolute;left:151px;top:834px" width="12" height="10" viewBox="0 0 12 10"><path d="M1.2 1 L10.6 9 M10.6 1 L1.2 9" stroke="#1e9be8" stroke-width="1.9"/></svg>
<span id="st0" style="position:absolute;left:70.4px;top:873.80px;font-size:13px;line-height:13px;color:#343434;white-space:pre;letter-spacing:0.402px;transform:scaleY(1.07);transform-origin:0 84.65%;-webkit-text-stroke:0.3px #343434;">7.2.9060.10 Standard</span>
<span id="st1" style="position:absolute;left:282.5px;top:873.80px;font-size:13px;line-height:13px;color:#343434;white-space:pre;letter-spacing:0.296px;transform:scaleY(1.07);transform-origin:0 84.65%;-webkit-text-stroke:0.3px #343434;">localhost (utf8)</span>
<span id="st2" style="position:absolute;left:451.5px;top:873.80px;font-size:13px;line-height:13px;color:#343434;white-space:pre;letter-spacing:0.076px;transform:scaleY(1.07);transform-origin:0 84.65%;-webkit-text-stroke:0.3px #343434;">NIKOLAY (MAIN)</span>
<span id="st3" style="position:absolute;left:633.0px;top:873.80px;font-size:13px;line-height:13px;color:#343434;white-space:pre;letter-spacing:0.342px;transform:scaleY(1.07);transform-origin:0 84.65%;-webkit-text-stroke:0.3px #343434;">25.09.2024</span>
<span id="st4" style="position:absolute;left:763.5px;top:873.80px;font-size:13px;line-height:13px;color:#343434;white-space:pre;letter-spacing:0.508px;transform:scaleY(1.07);transform-origin:0 84.65%;-webkit-text-stroke:0.3px #343434;">15:33:10:751</span>
<div style="position:absolute;left:230px;top:871px;width:1px;height:18px;background:#c2c2c2"></div>
<div style="position:absolute;left:399px;top:871px;width:1px;height:18px;background:#c2c2c2"></div>
<div style="position:absolute;left:578px;top:871px;width:1px;height:18px;background:#c2c2c2"></div>
<div style="position:absolute;left:727px;top:871px;width:1px;height:18px;background:#c2c2c2"></div>
<div style="position:absolute;left:875px;top:871px;width:1px;height:18px;background:#c2c2c2"></div>
<div style="position:absolute;left:1193px;top:871px;width:1px;height:18px;background:#c2c2c2"></div>
<svg style="position:absolute;left:0;top:0" width="1245" height="913" viewBox="0 0 1245 913"><path d="M1219.4 875.5 v2.8 M1218.0 876.9 h2.8" stroke="#757575" stroke-width="1"/><path d="M1214.3 880.8 v2.8 M1212.9 882.2 h2.8" stroke="#757575" stroke-width="1"/><path d="M1219.4 880.8 v2.8 M1218.0 882.2 h2.8" stroke="#757575" stroke-width="1"/><path d="M1209.2 886.1 v2.8 M1207.8 887.5 h2.8" stroke="#757575" stroke-width="1"/><path d="M1214.3 886.1 v2.8 M1212.9 887.5 h2.8" stroke="#757575" stroke-width="1"/><path d="M1219.4 886.1 v2.8 M1218.0 887.5 h2.8" stroke="#757575" stroke-width="1"/></svg>
<div style="position:absolute;left:883.8px;top:109.8px;width:35px;height:35px;border-radius:50%;background:radial-gradient(circle at 54% 47%,rgba(255,255,255,1) 0,rgba(255,255,255,0.8) 14%,rgba(255,255,255,0) 62%),conic-gradient(from 0deg,#f4f59a 0deg,#fff08a 30deg,#ffb08a 55deg,#f4508e 90deg,#ea55c8 130deg,#c86af0 165deg,#7a9cff 200deg,#55d8f5 235deg,#4cf0e0 265deg,#55e890 295deg,#6ee66a 325deg,#c8f27a 348deg,#f4f59a 360deg);box-shadow:inset 0 0 2px rgba(255,255,255,0.6)"></div><svg style="position:absolute;left:0;top:0" width="1245" height="913" viewBox="0 0 1245 913"><defs>
<filter id="fRound" x="-10%" y="-10%" width="120%" height="120%"><feGaussianBlur stdDeviation="0.45"/></filter>
<linearGradient id="gPage" x1="0" y1="0" x2="1" y2="1"><stop offset="0" stop-color="#fdfdfd"/><stop offset="1" stop-color="#e7e7e7"/></linearGradient>
<linearGradient id="gSilH" x1="0" y1="0" x2="1" y2="0"><stop offset="0" stop-color="#dcdcdc"/><stop offset="0.26" stop-color="#fbfbfb"/><stop offset="0.6" stop-color="#c9c9c9"/><stop offset="1" stop-color="#9c9c9c"/></linearGradient>
<linearGradient id="gRim" x1="0" y1="0" x2="0" y2="1"><stop offset="0" stop-color="#9a9a9a"/><stop offset="1" stop-color="#ececec"/></linearGradient>
<linearGradient id="gGreen" x1="0" y1="0" x2="0" y2="1"><stop offset="0" stop-color="#bfe388"/><stop offset="1" stop-color="#8dc450"/></linearGradient>
<linearGradient id="gGold" x1="0" y1="0" x2="0" y2="1"><stop offset="0" stop-color="#fbdf9c"/><stop offset="1" stop-color="#e8a74e"/></linearGradient>
<linearGradient id="gGray" x1="0" y1="0" x2="0" y2="1"><stop offset="0" stop-color="#cfcfcf"/><stop offset="1" stop-color="#ababab"/></linearGradient>
<linearGradient id="gGlass" x1="0" y1="0" x2="1" y2="1"><stop offset="0" stop-color="#f2f2f2"/><stop offset="1" stop-color="#c4c4c4"/></linearGradient>
<linearGradient id="gPencil" x1="0" y1="0" x2="0" y2="1"><stop offset="0" stop-color="#8f8f8f"/><stop offset="0.5" stop-color="#e3e3e3"/><stop offset="1" stop-color="#a5a5a5"/></linearGradient>
<linearGradient id="gFlag" x1="0" y1="0" x2="1" y2="0"><stop offset="0" stop-color="#e4e4e4"/><stop offset="0.22" stop-color="#fbfbfb"/><stop offset="0.5" stop-color="#b9b9b9"/><stop offset="0.68" stop-color="#ededed"/><stop offset="1" stop-color="#a6a6a6"/></linearGradient>
<linearGradient id="gSun" x1="0" y1="0" x2="0" y2="1"><stop offset="0" stop-color="#d98f5c"/><stop offset="0.45" stop-color="#efb884"/><stop offset="0.62" stop-color="#f7d49a"/><stop offset="0.72" stop-color="#dca064"/><stop offset="1" stop-color="#e5a058"/></linearGradient>
<radialGradient id="gSunGlow" cx="0.66" cy="0.64" r="0.42"><stop offset="0" stop-color="#fffbe6"/><stop offset="0.35" stop-color="#ffe9a8" stop-opacity="0.85"/><stop offset="1" stop-color="#f7d49a" stop-opacity="0"/></radialGradient>
<linearGradient id="gColMid" x1="0" y1="0" x2="1" y2="0"><stop offset="0" stop-color="#b9b9b9"/><stop offset="0.5" stop-color="#d6d6d6"/><stop offset="1" stop-color="#b9b9b9"/></linearGradient>

<linearGradient id="gPin" x1="0" y1="0" x2="1" y2="1"><stop offset="0" stop-color="#fdebc0"/><stop offset="0.55" stop-color="#f6cf85"/><stop offset="1" stop-color="#eeb85f"/></linearGradient>
<linearGradient id="gCalTop" x1="0" y1="0" x2="0" y2="1"><stop offset="0" stop-color="#ee7f70"/><stop offset="1" stop-color="#f6a092"/></linearGradient>
<linearGradient id="gGear" x1="0" y1="0" x2="1" y2="1"><stop offset="0" stop-color="#eceef3"/><stop offset="1" stop-color="#bfc3cf"/></linearGradient>
<linearGradient id="gShackle" x1="0" y1="0" x2="1" y2="0"><stop offset="0" stop-color="#9aa1aa"/><stop offset="0.3" stop-color="#f1f3f6"/><stop offset="0.62" stop-color="#bcc2ca"/><stop offset="1" stop-color="#959ca6"/></linearGradient>
<linearGradient id="gHair" x1="0" y1="0" x2="1" y2="1"><stop offset="0" stop-color="#d99558"/><stop offset="1" stop-color="#a3541f"/></linearGradient>
<linearGradient id="gSkin" x1="0" y1="0" x2="1" y2="1"><stop offset="0" stop-color="#fde9d2"/><stop offset="1" stop-color="#eec29a"/></linearGradient>
<linearGradient id="gBody" x1="0" y1="0" x2="0" y2="1"><stop offset="0" stop-color="#9fd05e"/><stop offset="1" stop-color="#68a22a"/></linearGradient>
<linearGradient id="gVest" x1="0" y1="0" x2="0" y2="1"><stop offset="0" stop-color="#d66060"/><stop offset="1" stop-color="#b83e3e"/></linearGradient>
<linearGradient id="gKey" x1="0" y1="0" x2="1" y2="1"><stop offset="0" stop-color="#fbe0a0"/><stop offset="1" stop-color="#e8ad52"/></linearGradient>
<linearGradient id="gInfo" x1="0" y1="0" x2="0" y2="1"><stop offset="0" stop-color="#5380d0"/><stop offset="1" stop-color="#a1bff0"/></linearGradient>
<linearGradient id="gPlug" x1="0" y1="0" x2="0" y2="1"><stop offset="0" stop-color="#6aa7d8"/><stop offset="1" stop-color="#5593c9"/></linearGradient>

<radialGradient id="gLens" cx="0.45" cy="0.3" r="0.8"><stop offset="0" stop-color="#c9e9ff"/><stop offset="0.55" stop-color="#8fc6fb"/><stop offset="1" stop-color="#5d8fe0"/></radialGradient>
<linearGradient id="gHandle" x1="0" y1="0" x2="1" y2="0"><stop offset="0" stop-color="#f7c765"/><stop offset="1" stop-color="#e99a25"/></linearGradient>
<radialGradient id="gClock" cx="0.4" cy="0.35" r="0.8"><stop offset="0" stop-color="#ffffff"/><stop offset="0.7" stop-color="#e9f2ff"/><stop offset="1" stop-color="#b8d2f7"/></radialGradient>
<linearGradient id="gDoor" x1="0" y1="0" x2="1" y2="0"><stop offset="0" stop-color="#d96f1c"/><stop offset="0.5" stop-color="#f3b469"/><stop offset="1" stop-color="#d96f1c"/></linearGradient>
<linearGradient id="gRoof" x1="0" y1="0" x2="0" y2="1"><stop offset="0" stop-color="#9ad043"/><stop offset="1" stop-color="#5e9e17"/></linearGradient>
<linearGradient id="gLockS" x1="0" y1="0" x2="0" y2="1"><stop offset="0" stop-color="#e9d680"/><stop offset="0.5" stop-color="#d4b64a"/><stop offset="1" stop-color="#c39f2d"/></linearGradient>
<linearGradient id="gDB" x1="0" y1="0" x2="1" y2="0"><stop offset="0" stop-color="#e29a3c"/><stop offset="0.3" stop-color="#fff2c6"/><stop offset="0.6" stop-color="#f4b544"/><stop offset="1" stop-color="#d8852d"/></linearGradient>
<linearGradient id="gWinT" x1="0" y1="0" x2="0" y2="1"><stop offset="0" stop-color="#4b8ad4"/><stop offset="1" stop-color="#86b5ea"/></linearGradient>
<linearGradient id="gWinB" x1="0" y1="0" x2="0" y2="1"><stop offset="0" stop-color="#f3f5fc"/><stop offset="1" stop-color="#dde3f4"/></linearGradient>
<linearGradient id="gBell" x1="0" y1="0" x2="1" y2="1"><stop offset="0" stop-color="#fbd86a"/><stop offset="1" stop-color="#e9a21f"/></linearGradient>
</defs><g opacity="0.86"><path d="M44.6 109.6 H62.099999999999994 L70.2 117.7 V141.6 H44.6 Z" fill="url(#gPage)" stroke="#cbcbcb" stroke-width="1.3" stroke-linejoin="round"/><path d="M62.099999999999994 109.6 V117.7 H70.2 Z" fill="#f8f8f8" stroke="#c6c6c6" stroke-width="1.1" stroke-linejoin="round"/><circle cx="65.9" cy="135.1" r="9.3" fill="url(#gGray)" stroke="#dcdcdc" stroke-width="1.5"/><path d="M65.9 129.4 V140.8 M60.2 135.1 H71.6" stroke="#fdfdfd" stroke-width="3.1"/><path d="M99.6 108.39999999999999 H115.5 L122.9 115.8 V137.9 H99.6 Z" fill="url(#gPage)" stroke="#cbcbcb" stroke-width="1.3" stroke-linejoin="round"/><path d="M115.5 108.39999999999999 V115.8 H122.9 Z" fill="#f8f8f8" stroke="#c6c6c6" stroke-width="1.1" stroke-linejoin="round"/><path d="M93.19999999999999 114.6 H109.0 L116.4 122 V144.0 H93.19999999999999 Z" fill="url(#gPage)" stroke="#cbcbcb" stroke-width="1.3" stroke-linejoin="round"/><path d="M109.0 114.6 V122 H116.4 Z" fill="#f8f8f8" stroke="#c6c6c6" stroke-width="1.1" stroke-linejoin="round"/><path d="M150.79999999999998 109.39999999999999 H168.4 V141.6 H141.79999999999998 V118.39999999999999 Z" fill="url(#gPage)" stroke="#cbcbcb" stroke-width="1.3" stroke-linejoin="round"/><path d="M150.79999999999998 109.39999999999999 V118.39999999999999 H141.79999999999998 Z" fill="#f8f8f8" stroke="#c6c6c6" stroke-width="1.1" stroke-linejoin="round"/><g transform="translate(149.3 146) rotate(-44.6)"><path d="M0 0 L6.5 -2.4 V2.4 Z" fill="#d9d9d9" stroke="#9a9a9a" stroke-width="0.5"/><path d="M0 0 L2.4 -0.9 V0.9 Z" fill="#6c6c6c"/><rect x="6.5" y="-2.4" width="24" height="4.8" fill="url(#gPencil)" stroke="#8d8d8d" stroke-width="0.6"/><rect x="30.5" y="-2.4" width="3" height="4.8" rx="1" fill="#9b9b9b" stroke="#858585" stroke-width="0.5"/></g><path d="M190.79999999999998 108.39999999999999 H209.7 L218.1 116.8 V141.6 H190.79999999999998 Z" fill="url(#gPage)" stroke="#cbcbcb" stroke-width="1.3" stroke-linejoin="round"/><path d="M209.7 108.39999999999999 V116.8 H218.1 Z" fill="#f8f8f8" stroke="#c6c6c6" stroke-width="1.1" stroke-linejoin="round"/><path d="M209.9 133.3 L220.4 143.7 M220.4 133.3 L209.9 143.7" stroke="#a3a3a3" stroke-width="4.8" stroke-linecap="round"/><path d="M209.9 133.1 L220.4 143.3 M220.4 133.1 L209.9 143.3" stroke="#b4b4b4" stroke-width="2.2" stroke-linecap="round"/></g><path d="M249.7 127.89999999999999 A15.8 15.8 0 1 1 259.33 142.14 L261.70 134.75 A8.1 8.1 0 1 0 257.4 127.89999999999999 L262.2 127.89999999999999 L252.9 144.4 L243.5 127.89999999999999 Z" fill="url(#gGreen)" stroke="#7cb342" stroke-width="0.9" stroke-linejoin="round"/><path d="M251.29999999999998 125.6 A14.200000000000001 14.200000000000001 0 0 1 278.3 121.6" fill="none" stroke="#d3ecab" stroke-width="1.2" opacity="0.8"/><g opacity="0.88"><path d="M316.8 133.6 L326.6 142" stroke="#b5b5b5" stroke-width="5.2" stroke-linecap="round"/><path d="M317.2 133.4 L326.3 141.2" stroke="#e4e4e4" stroke-width="2" stroke-linecap="round"/><circle cx="307.5" cy="123.7" r="12.9" fill="#f6f6f6" stroke="#c7c7c7" stroke-width="1.2"/><circle cx="307.5" cy="123.7" r="9.4" fill="url(#gGlass)" stroke="#cccccc" stroke-width="0.9"/><path d="M353.7 114.664 C353.7 127.14592 360.084 130.95984 365.0 132.6 L365.7 142.6 Q368.9 145.39999999999998 372.09999999999997 142.6 L372.79999999999995 132.6 C377.71599999999995 130.95984 384.09999999999997 127.14592 384.09999999999997 114.664 Z" fill="url(#gSilH)" stroke="#b4b4b4" stroke-width="0.9"/><ellipse cx="368.9" cy="114.664" rx="15.2" ry="4.864" fill="#ececec" stroke="#bababa" stroke-width="0.9"/><ellipse cx="368.9" cy="115.34496" rx="12.767999999999999" ry="3.21024" fill="url(#gRim)"/><rect x="398.5" y="111.9" width="34.6" height="19.8" fill="#fbfbfb" stroke="#c9c9c9" stroke-width="1.1"/><rect x="407.9" y="112.4" width="16" height="18.8" fill="url(#gColMid)"/><path d="M404.9 117.8 V125.4 L401 121.6 Z M426.4 117.8 V125.4 L430.4 121.6 Z" fill="#a3a3a3"/><path d="M419.7 131.59599999999998 C419.7 136.20687999999998 423.501 137.61576 426.35 138.6 L427.05 144.0 Q428.75 146.79999999999998 430.45 144.0 L431.15 138.6 C433.999 137.61576 437.8 136.20687999999998 437.8 131.59599999999998 Z" fill="url(#gSilH)" stroke="#b4b4b4" stroke-width="0.9"/><ellipse cx="428.75" cy="131.59599999999998" rx="9.05" ry="2.8960000000000004" fill="#ececec" stroke="#bababa" stroke-width="0.9"/><ellipse cx="428.75" cy="132.00143999999997" rx="7.602" ry="1.9113600000000004" fill="url(#gRim)"/><path d="M450 114.008 C450 124.80224 455.523 128.10048 459.95 129.6 L460.65 137.8 Q463.15 140.6 465.65 137.8 L466.34999999999997 129.6 C470.777 128.10048 476.3 124.80224 476.3 114.008 Z" fill="url(#gSilH)" stroke="#b4b4b4" stroke-width="0.9"/><ellipse cx="463.15" cy="114.008" rx="13.15" ry="4.208" fill="#ececec" stroke="#bababa" stroke-width="0.9"/><ellipse cx="463.15" cy="114.59711999999999" rx="11.046" ry="2.77728" fill="url(#gRim)"/><rect x="465.7" y="126.5" width="17.6" height="17.4" fill="#f3f3f3" stroke="#c3c3c3" stroke-width="1.1"/><path d="M469 135.2 L472.7 139.2 L480.2 130.4" fill="none" stroke="#a6a6a6" stroke-width="2.4"/><path d="M513 111.2 C519 108.5 525 111 529 114.5 C533 118 538 119.6 542.6 118.6 C539 124 533 128.6 527.5 127.4 C522 126.2 518 127.6 513 130.8 Z" fill="url(#gFlag)" stroke="#bdbdbd" stroke-width="0.8"/><rect x="509.3" y="110.2" width="3.3" height="34.8" rx="1.2" fill="url(#gSilH)" stroke="#9d9d9d" stroke-width="0.7"/></g><rect x="555.5" y="113.2" width="33.9" height="28.6" fill="#ffffff" stroke="#a3b2dd" stroke-width="1.4"/><rect x="558.7" y="116" width="27.6" height="22.9" fill="url(#gSun)"/><rect x="558.7" y="116" width="27.6" height="22.9" fill="url(#gSunGlow)"/><path d="M558.7 131.2 C564 130.4 569 131 574 132.2 L558.7 133.2 Z" fill="#9c6d4c" opacity="0.75"/><g opacity="0.9"><path d="M638.8 113.3 H629.3 V117.2 M638.8 142.1 H629.3 V138.2" fill="none" stroke="#a7a7a7" stroke-width="1.1"/><rect x="625.5" y="120.9" width="14" height="13.6" fill="#c9c9c9" stroke="#b4b4b4" stroke-width="1"/><path d="M632.5 123.6 V131.8 M628.4 127.7 H636.6" stroke="#959595" stroke-width="2.3"/><rect x="643" y="110.9" width="16.2" height="11.2" fill="#fafafa" stroke="#d2d2d2" stroke-width="1"/><rect x="643" y="122.3" width="16.2" height="11.2" fill="#fafafa" stroke="#d2d2d2" stroke-width="1"/><rect x="643" y="133.6" width="16.2" height="11.2" fill="#fafafa" stroke="#d2d2d2" stroke-width="1"/><path d="M647.6 116.4 H655" stroke="#a5a5a5" stroke-width="2.6"/><path d="M647.6 127.7 H655" stroke="#a5a5a5" stroke-width="2.6"/><path d="M647.6 138.8 H655" stroke="#a5a5a5" stroke-width="2.6"/></g><ellipse cx="752.5" cy="139.5" rx="7" ry="2.6" fill="#000" opacity="0.07" transform="rotate(-32 752.5 139.5)"/><path d="M745.6 144.2 C741.5 137 732.6 131.5 732.6 122.9 C732.6 115.7 738.4 110.3 745.6 110.3 C752.8 110.3 758.6 115.7 758.6 122.9 C758.6 131.5 749.7 137 745.6 144.2 Z" fill="url(#gPin)" stroke="#d7a255" stroke-width="1.1"/><circle cx="745.6" cy="123" r="4.2" fill="#ffffff" stroke="#dba95f" stroke-width="1.4"/><rect x="777.9" y="111.3" width="33.9" height="33" rx="2" fill="#f7f8fd" stroke="#a7b0db" stroke-width="1.1"/><path d="M777.9 119.4 V113.3 a2 2 0 0 1 2 -2 H809.8 a2 2 0 0 1 2 2 V119.4 Z" fill="url(#gCalTop)" stroke="#e88a7c" stroke-width="0.8"/><rect x="778.5" y="140.4" width="32.8" height="3.6" fill="#c2c9ec"/><rect x="784" y="108.6" width="3.6" height="7" rx="1" fill="#8d9bb4" stroke="#6f7f9b" stroke-width="0.5"/><rect x="785.1" y="109.4" width="1.2" height="5.4" fill="#dfe5f0"/><rect x="802.6" y="108.6" width="3.6" height="7" rx="1" fill="#8d9bb4" stroke="#6f7f9b" stroke-width="0.5"/><rect x="803.7" y="109.4" width="1.2" height="5.4" fill="#dfe5f0"/><rect x="782.30" y="122.5" width="2.5" height="2.4" fill="#a5addb"/><rect x="786.12" y="122.5" width="2.5" height="2.4" fill="#a5addb"/><rect x="789.94" y="122.5" width="2.5" height="2.4" fill="#a5addb"/><rect x="793.76" y="122.5" width="2.5" height="2.4" fill="#a5addb"/><rect x="797.58" y="122.5" width="2.5" height="2.4" fill="#a5addb"/><rect x="801.40" y="122.5" width="2.5" height="2.4" fill="#f0836a"/><rect x="805.22" y="122.5" width="2.5" height="2.4" fill="#f0836a"/><rect x="782.30" y="126.4" width="2.5" height="2.4" fill="#a5addb"/><rect x="786.12" y="126.4" width="2.5" height="2.4" fill="#a5addb"/><rect x="789.94" y="126.4" width="2.5" height="2.4" fill="#a5addb"/><rect x="793.76" y="126.4" width="2.5" height="2.4" fill="#a5addb"/><rect x="797.58" y="126.4" width="2.5" height="2.4" fill="#a5addb"/><rect x="801.40" y="126.4" width="2.5" height="2.4" fill="#f0836a"/><rect x="805.22" y="126.4" width="2.5" height="2.4" fill="#f0836a"/><rect x="782.30" y="130.1" width="2.5" height="2.4" fill="#a5addb"/><rect x="786.12" y="130.1" width="2.5" height="2.4" fill="#a5addb"/><rect x="789.94" y="130.1" width="2.5" height="2.4" fill="#a5addb"/><rect x="793.76" y="130.1" width="2.5" height="2.4" fill="#a5addb"/><rect x="797.58" y="130.1" width="2.5" height="2.4" fill="#a5addb"/><rect x="801.40" y="130.1" width="2.5" height="2.4" fill="#f0836a"/><rect x="805.22" y="130.1" width="2.5" height="2.4" fill="#f0836a"/><rect x="782.30" y="133.9" width="2.5" height="2.4" fill="#a5addb"/><rect x="786.12" y="133.9" width="2.5" height="2.4" fill="#a5addb"/><rect x="789.94" y="133.9" width="2.5" height="2.4" fill="#a5addb"/><rect x="793.76" y="133.9" width="2.5" height="2.4" fill="#a5addb"/><rect x="797.58" y="133.9" width="2.5" height="2.4" fill="#a5addb"/><rect x="801.40" y="133.9" width="2.5" height="2.4" fill="#f0836a"/><rect x="805.22" y="133.9" width="2.5" height="2.4" fill="#f0836a"/><path d="M848.99 113.20 L849.41 108.54 A19.1 19.1 0 0 1 855.39 108.54 L855.81 113.20 A14.6 14.6 0 0 1 860.03 114.95 L863.63 111.95 A19.1 19.1 0 0 1 867.85 116.17 L864.85 119.77 A14.6 14.6 0 0 1 866.60 123.99 L871.26 124.41 A19.1 19.1 0 0 1 871.26 130.39 L866.60 130.81 A14.6 14.6 0 0 1 864.85 135.03 L867.85 138.63 A19.1 19.1 0 0 1 863.63 142.85 L860.03 139.85 A14.6 14.6 0 0 1 855.81 141.60 L855.39 146.26 A19.1 19.1 0 0 1 849.41 146.26 L848.99 141.60 A14.6 14.6 0 0 1 844.77 139.85 L841.17 142.85 A19.1 19.1 0 0 1 836.95 138.63 L839.95 135.03 A14.6 14.6 0 0 1 838.20 130.81 L833.54 130.39 A19.1 19.1 0 0 1 833.54 124.41 L838.20 123.99 A14.6 14.6 0 0 1 839.95 119.77 L836.95 116.17 A19.1 19.1 0 0 1 841.17 111.95 L844.77 114.95 A14.6 14.6 0 0 1 848.99 113.20 Z" fill="url(#gGear)" stroke="#a4a8b5" stroke-width="1.1" stroke-linejoin="round" filter="url(#fRound)"/><circle cx="852.4" cy="127.4" r="6.3" fill="#ffffff" stroke="#a9adba" stroke-width="1.3"/><path d="M948.7 124.5 V119.6 C948.7 107.2 968.9 107.2 968.9 119.6 V124.5" fill="none" stroke="url(#gShackle)" stroke-width="4.6"/><path d="M946.6 124.5 V119.6 C946.6 104.6 971 104.6 971 119.6 V124.5 M950.9 124.5 V119.6 C950.9 110 966.7 110 966.7 119.6 V124.5" fill="none" stroke="#8a919a" stroke-width="0.6" opacity="0.55"/><rect x="944.4" y="124.1" width="29" height="20" rx="2" fill="url(#gGold)" stroke="#d6974a" stroke-width="1.1"/><path d="M945.6 125.6 H972.2" stroke="#fdeec6" stroke-width="1"/><path d="M958.5 129.2 a2.7 2.7 0 0 1 1.5 5 L960.6 138.8 H956.4 L957 134.2 a2.7 2.7 0 0 1 1.5 -5 Z" fill="#4a5866"/><path d="M991.4 144.2 C991.4 134 995 129.4 1002 128.2 L1012 128.2 C1019 129.4 1023 134 1023 144.2 Z" fill="#f2f2f2" stroke="#9e9e9e" stroke-width="0.9"/><path d="M996.4 144.2 V131.6 L1002 128.6 L1007.2 136 L1012.4 128.6 L1018 131.6 V144.2 Z" fill="url(#gVest)" stroke="#a43a3a" stroke-width="0.6"/><path d="M1002 128.4 L1007.2 135.4 L1012.4 128.4 L1009.8 126.6 H1004.6 Z" fill="#fafafa" stroke="#b9b9b9" stroke-width="0.5"/><path d="M1004.6 124 H1009.8 V128.4 L1007.2 130.6 L1004.6 128.4 Z" fill="#e9b98f"/><ellipse cx="1007.2" cy="119.4" rx="6.3" ry="7.4" fill="url(#gSkin)"/><path d="M998.9 120.6 C996.9 110.6 1001.6 107.2 1007 107.2 C1013 107.2 1017.6 110.8 1015.6 120.8 C1015 116.6 1013.6 114.4 1011.6 113.4 C1008.4 115.4 1003.6 115 1002 114 C1000.6 116 1000.8 121.4 1001.4 124.4 C999.8 124 999.2 122.6 998.9 120.6 Z" fill="url(#gHair)" stroke="#a5673a" stroke-width="0.4"/><g transform="translate(1020.6 131.2) rotate(136)"><path d="M0 -4.2 a4.2 4.2 0 1 0 0.01 0 Z M-0.6 -1.7 a1.4 1.4 0 1 1 -0.01 0 Z" transform="translate(0 -0.2)" fill="url(#gKey)" stroke="#d39a48" stroke-width="0.8" fill-rule="evenodd"/><path d="M3.4 -1.25 H17.2 L18.3 0 L17.2 1.25 H15.6 V2.9 H13.6 V1.25 H12 V2.4 H10.2 V1.25 H3.4 Z" fill="url(#gKey)" stroke="#d39a48" stroke-width="0.8"/></g><g transform="translate(1047.6 110.8) scale(1.17 1.33)"><path d="M-8.7 17.1 C-8.7 13.4 -5.6 11.2 0 11.2 C5.6 11.2 8.7 13.4 8.7 17.1 C6 17.9 -6 17.9 -8.7 17.1 Z" fill="url(#gBody)" stroke="#5f9229" stroke-width="0.5"/><path d="M-6.6 13.2 C-4 12 4 12 6.6 13.2" stroke="#bfe08a" stroke-width="0.7" fill="none" opacity="0.7"/><path d="M-2 9.6 H2.2 V12 C1 13.1 -1 13.1 -2 12 Z" fill="#dfa77a"/><ellipse cx="0" cy="5.3" rx="5" ry="5.5" fill="url(#gHair)"/><path d="M-2.6 4.6 C-1 5 1.4 4.6 2.6 3.6 C3.6 4.6 3.9 6.4 3.6 8 C3.2 10 1.8 11.4 0.4 11.4 C-1.2 11.4 -2.6 10 -3 8 C-3.2 6.8 -3.1 5.6 -2.6 4.6 Z" fill="url(#gSkin)"/><path d="M-3.6 2.2 C-2 0.8 1.6 0.6 3.4 2" stroke="#efc093" stroke-width="0.7" fill="none" opacity="0.7"/></g><g transform="translate(1064.6 110.2) scale(1.17 1.36)"><path d="M-8.7 17.1 C-8.7 13.4 -5.6 11.2 0 11.2 C5.6 11.2 8.7 13.4 8.7 17.1 C6 17.9 -6 17.9 -8.7 17.1 Z" fill="url(#gBody)" stroke="#5f9229" stroke-width="0.5"/><path d="M-6.6 13.2 C-4 12 4 12 6.6 13.2" stroke="#bfe08a" stroke-width="0.7" fill="none" opacity="0.7"/><path d="M-2 9.6 H2.2 V12 C1 13.1 -1 13.1 -2 12 Z" fill="#dfa77a"/><ellipse cx="0" cy="5.3" rx="5" ry="5.5" fill="url(#gHair)"/><path d="M-2.6 4.6 C-1 5 1.4 4.6 2.6 3.6 C3.6 4.6 3.9 6.4 3.6 8 C3.2 10 1.8 11.4 0.4 11.4 C-1.2 11.4 -2.6 10 -3 8 C-3.2 6.8 -3.1 5.6 -2.6 4.6 Z" fill="url(#gSkin)"/><path d="M-3.6 2.2 C-2 0.8 1.6 0.6 3.4 2" stroke="#efc093" stroke-width="0.7" fill="none" opacity="0.7"/></g><g transform="translate(1056.3 115.9) scale(1.42 1.56)"><path d="M-8.7 17.1 C-8.7 13.4 -5.6 11.2 0 11.2 C5.6 11.2 8.7 13.4 8.7 17.1 C6 17.9 -6 17.9 -8.7 17.1 Z" fill="url(#gBody)" stroke="#5f9229" stroke-width="0.5"/><path d="M-6.6 13.2 C-4 12 4 12 6.6 13.2" stroke="#bfe08a" stroke-width="0.7" fill="none" opacity="0.7"/><path d="M-2 9.6 H2.2 V12 C1 13.1 -1 13.1 -2 12 Z" fill="#dfa77a"/><ellipse cx="0" cy="5.3" rx="5" ry="5.5" fill="url(#gHair)"/><path d="M-2.6 4.6 C-1 5 1.4 4.6 2.6 3.6 C3.6 4.6 3.9 6.4 3.6 8 C3.2 10 1.8 11.4 0.4 11.4 C-1.2 11.4 -2.6 10 -3 8 C-3.2 6.8 -3.1 5.6 -2.6 4.6 Z" fill="url(#gSkin)"/><path d="M-3.6 2.2 C-2 0.8 1.6 0.6 3.4 2" stroke="#efc093" stroke-width="0.7" fill="none" opacity="0.7"/></g><rect x="1096.2" y="108.6" width="3.8" height="13" rx="1" fill="#5f9fd3"/><rect x="1109.6" y="108.6" width="3.8" height="13" rx="1" fill="#5f9fd3"/><path d="M1090.6 120.1 H1119.2 V124.6 H1117.5 V130.6 C1117.5 135.6 1113.8 138.8 1109.4 138.8 H1100.4 C1096 138.8 1092.4 135.6 1092.4 130.6 V124.6 H1090.6 Z" fill="url(#gPlug)"/><path d="M1104 125.2 H1107.6 L1105.8 128.6 H1108 L1103.2 135.4 L1104.6 130.6 H1102.2 Z" fill="#ffffff"/><path d="M1099.8 140 H1110 V142.2 L1107.2 144 V146 H1102.8 V144 L1099.8 142.2 Z" fill="#5f6770"/><circle cx="1162.5" cy="127.3" r="17" fill="#fdfdff" stroke="#b1b6e2" stroke-width="1.2"/><circle cx="1162.5" cy="127.3" r="13.7" fill="url(#gInfo)" stroke="#5878c6" stroke-width="0.8"/><path d="M1151 121.6 A13 13 0 0 1 1174 121.6 A20 20 0 0 0 1151 121.6 Z" fill="#ffffff" opacity="0.18"/><text x="1162.6" y="136.8" font-family="Liberation Serif" font-weight="bold" font-size="27" text-anchor="middle" fill="#ffffff" stroke="#ffffff" stroke-width="0.7">i</text><path d="M28.5 175.4 V172.6 Q28.5 171.2 30 171.2 H36 Q37.4 171.2 38 172.4 L38.8 173.8 H44.4 Q45.4 173.8 45.4 174.8 V175.4 Z" fill="#6f6f6f"/><rect x="28.5" y="174.9" width="17.4" height="9.9" fill="#ffc368"/><g transform="translate(63.6 169.8) scale(1.0)"><rect x="14.4" y="1.4" width="3" height="5" fill="#a9b8e4" stroke="#7f95d6" stroke-width="0.6"/><path d="M3 9.4 L10.1 3.8 L17.2 9.4 V18.7 H3 Z" fill="#e9edf9" stroke="#7189d3" stroke-width="1.1"/><rect x="7.6" y="10.4" width="4.8" height="8.2" fill="url(#gDoor)" stroke="#c9661b" stroke-width="0.5"/><path d="M0.5 10 L10.1 2.5 L19.8 10" fill="none" stroke="url(#gRoof)" stroke-width="2.9" stroke-linejoin="miter"/><path d="M1 9 L10.1 1.7 L19.3 9" fill="none" stroke="#a8d85c" stroke-width="0.8" opacity="0.8"/></g><path d="M319.25 220.17 L326.40 227.20" stroke="#d98c1f" stroke-width="4.2" stroke-linecap="round"/><path d="M319.25 220.17 L326.40 227.20" stroke="#f6bf55" stroke-width="2.6" stroke-linecap="round"/><circle cx="314.4" cy="215.4" r="6.2" fill="url(#gLens)" stroke="#5f80c9" stroke-width="1.3"/><ellipse cx="314.4" cy="218.00400000000002" rx="3.844" ry="1.8599999999999999" fill="#ffffff" opacity="0.55"/><circle cx="372.3" cy="218.8" r="9.2" fill="url(#gClock)" stroke="#3a6fca" stroke-width="1.5"/><path d="M368.6 219.7 L372.3 218.8 L376.9 213.6" fill="none" stroke="#4463c7" stroke-width="1.1"/><path d="M371.4 217 L374.7 224.6" fill="none" stroke="#f08a5a" stroke-width="0.9"/><path d="M102.3 294.6 V282.8 Q102.3 281.4 103.8 281.4 H109.2 Q110.4 281.4 110.9 282.4 L111.6 283.7 H118.2 Q119.5 283.7 119.5 285 V288 H108.6 L102.3 294.6 Z" fill="#717171"/><path d="M108.4 287.8 H122.7 L118.4 295 H102.4 Z" fill="#ffb94f"/><clipPath id="cpTree"><rect x="63" y="300" width="301" height="15.4"/></clipPath><g clip-path="url(#cpTree)"><g transform="translate(136 309.8) scale(1.0)"><rect x="14.4" y="1.4" width="3" height="5" fill="#a9b8e4" stroke="#7f95d6" stroke-width="0.6"/><path d="M3 9.4 L10.1 3.8 L17.2 9.4 V18.7 H3 Z" fill="#e9edf9" stroke="#7189d3" stroke-width="1.1"/><rect x="7.6" y="10.4" width="4.8" height="8.2" fill="url(#gDoor)" stroke="#c9661b" stroke-width="0.5"/><path d="M0.5 10 L10.1 2.5 L19.8 10" fill="none" stroke="url(#gRoof)" stroke-width="2.9" stroke-linejoin="miter"/><path d="M1 9 L10.1 1.7 L19.3 9" fill="none" stroke="#a8d85c" stroke-width="0.8" opacity="0.8"/></g></g><g transform="translate(38.6 312.7) scale(1.0 1.0)"><path d="M-8.7 17.1 C-8.7 13.4 -5.6 11.2 0 11.2 C5.6 11.2 8.7 13.4 8.7 17.1 C6 17.9 -6 17.9 -8.7 17.1 Z" fill="url(#gBody)" stroke="#5f9229" stroke-width="0.5"/><path d="M-6.6 13.2 C-4 12 4 12 6.6 13.2" stroke="#bfe08a" stroke-width="0.7" fill="none" opacity="0.7"/><path d="M-2 9.6 H2.2 V12 C1 13.1 -1 13.1 -2 12 Z" fill="#dfa77a"/><ellipse cx="0" cy="5.3" rx="5" ry="5.5" fill="url(#gHair)"/><path d="M-2.6 4.6 C-1 5 1.4 4.6 2.6 3.6 C3.6 4.6 3.9 6.4 3.6 8 C3.2 10 1.8 11.4 0.4 11.4 C-1.2 11.4 -2.6 10 -3 8 C-3.2 6.8 -3.1 5.6 -2.6 4.6 Z" fill="url(#gSkin)"/><path d="M-3.6 2.2 C-2 0.8 1.6 0.6 3.4 2" stroke="#efc093" stroke-width="0.7" fill="none" opacity="0.7"/></g><g transform="translate(73.6 335.2) scale(0.985 0.985)"><path d="M-8.7 17.1 C-8.7 13.4 -5.6 11.2 0 11.2 C5.6 11.2 8.7 13.4 8.7 17.1 C6 17.9 -6 17.9 -8.7 17.1 Z" fill="url(#gBody)" stroke="#5f9229" stroke-width="0.5"/><path d="M-6.6 13.2 C-4 12 4 12 6.6 13.2" stroke="#bfe08a" stroke-width="0.7" fill="none" opacity="0.7"/><path d="M-2 9.6 H2.2 V12 C1 13.1 -1 13.1 -2 12 Z" fill="#dfa77a"/><ellipse cx="0" cy="5.3" rx="5" ry="5.5" fill="url(#gHair)"/><path d="M-2.6 4.6 C-1 5 1.4 4.6 2.6 3.6 C3.6 4.6 3.9 6.4 3.6 8 C3.2 10 1.8 11.4 0.4 11.4 C-1.2 11.4 -2.6 10 -3 8 C-3.2 6.8 -3.1 5.6 -2.6 4.6 Z" fill="url(#gSkin)"/><path d="M-3.6 2.2 C-2 0.8 1.6 0.6 3.4 2" stroke="#efc093" stroke-width="0.7" fill="none" opacity="0.7"/></g><g transform="translate(421 869.8) scale(1.03 1.03)"><path d="M-8.7 17.1 C-8.7 13.4 -5.6 11.2 0 11.2 C5.6 11.2 8.7 13.4 8.7 17.1 C6 17.9 -6 17.9 -8.7 17.1 Z" fill="url(#gBody)" stroke="#5f9229" stroke-width="0.5"/><path d="M-6.6 13.2 C-4 12 4 12 6.6 13.2" stroke="#bfe08a" stroke-width="0.7" fill="none" opacity="0.7"/><path d="M-2 9.6 H2.2 V12 C1 13.1 -1 13.1 -2 12 Z" fill="#dfa77a"/><ellipse cx="0" cy="5.3" rx="5" ry="5.5" fill="url(#gHair)"/><path d="M-2.6 4.6 C-1 5 1.4 4.6 2.6 3.6 C3.6 4.6 3.9 6.4 3.6 8 C3.2 10 1.8 11.4 0.4 11.4 C-1.2 11.4 -2.6 10 -3 8 C-3.2 6.8 -3.1 5.6 -2.6 4.6 Z" fill="url(#gSkin)"/><path d="M-3.6 2.2 C-2 0.8 1.6 0.6 3.4 2" stroke="#efc093" stroke-width="0.7" fill="none" opacity="0.7"/></g><path d="M329.30 397.93 L336.20 404.60" stroke="#d98c1f" stroke-width="4.2" stroke-linecap="round"/><path d="M329.30 397.93 L336.20 404.60" stroke="#f6bf55" stroke-width="2.6" stroke-linecap="round"/><circle cx="324.2" cy="393" r="6.5" fill="url(#gLens)" stroke="#5f80c9" stroke-width="1.3"/><ellipse cx="324.2" cy="395.73" rx="4.03" ry="1.95" fill="#ffffff" opacity="0.55"/><path d="M361.5 395 V391.6 C361.5 384.7 371.2 384.7 371.2 391.6 V395" fill="none" stroke="#8a8a8a" stroke-width="2.6"/><path d="M361.5 395 V391.6 C361.5 384.7 371.2 384.7 371.2 391.6 V395" fill="none" stroke="#dcdcdc" stroke-width="0.9"/><rect x="358" y="394.9" width="16.4" height="11.6" rx="1.6" fill="url(#gLockS)" stroke="#a88a22" stroke-width="1"/><g opacity="0.9"><path d="M474.4 314 V326 M493.1 314 V326 M483.5 318.6 V323.6" stroke="#6b807d" stroke-width="1.3" stroke-linecap="round"/><ellipse cx="483.8" cy="313.9" rx="9.5" ry="4.3" fill="#f5b427" stroke="#5f7573" stroke-width="2.6"/><ellipse cx="483.8" cy="313.9" rx="8.2" ry="3.6" fill="none" stroke="#8ea09c" stroke-width="0.7" stroke-dasharray="1.2 1.6"/><path d="M880 369.4 Q880 368.8 880.8 368.8 H887.6 Q888.6 368.8 888.6 369.8 V375 Q892 377.2 896 378.2 Q897.4 378.8 897.2 381 H880 Z" fill="#58679a"/><path d="M881 370.6 H885.6 L884.4 374.2 H881 Z" fill="#b0b8d6" opacity="0.9"/><path d="M885.6 379 L887.2 377 L888.8 379 Z" fill="#e0683c"/><rect x="879.6" y="380.8" width="18" height="2.2" fill="#94a3cb"/><circle cx="881.1" cy="385.4" r="2.45" fill="#c94a48"/><circle cx="886.2" cy="385.4" r="2.45" fill="#c94a48"/><circle cx="891.2" cy="385.4" r="2.45" fill="#c94a48"/><circle cx="896.3" cy="385.4" r="2.45" fill="#c94a48"/><rect x="890.2" y="368.3" width="2.4" height="2.6" fill="#c9a6ac"/><rect x="895.3" y="370.6" width="2.8" height="3" fill="#c9b0b0"/></g><path d="M88.2 797.6 L87.4 794.6 C85.6 792 85.2 789.6 85.3 786.6 C85.3 784.6 87.4 784.6 87.5 786.6 L87.7 788.6 V782.4 C87.7 780.6 89.9 780.6 89.9 782.4 V786.6 L90.1 780.6 C90.2 778.8 92.5 778.8 92.5 780.6 L92.6 786.6 L93 782 C93.1 780.4 95.3 780.5 95.2 782.2 L95 788 L96.6 785.6 C97.6 784 99.6 785 98.8 786.6 C97.8 789 97.4 792 96 794.6 L95.2 797.6 Z" fill="#f9dfdc" stroke="#8b7fcb" stroke-width="0.9" stroke-linejoin="round"/><circle cx="153.8" cy="787.9" r="9.7" fill="#457fbf"/><rect x="152.4" y="786.2" width="2.8" height="6.6" fill="#fff"/><circle cx="153.8" cy="783.2" r="1.6" fill="#fff"/><g transform="translate(206.5 796.3) rotate(-44.6)"><path d="M0 0 H8.4" stroke="#767b88" stroke-width="1.2" stroke-linecap="round"/><path d="M8 -5.2 V5.2 H9.4 L13 2.5 H17.4 V-2.5 H13 L9.4 -5.2 Z" fill="#4cc65c"/><path d="M8 -5.2 V5.2 H9.2 V-5.2 Z" fill="#3aa74a"/><rect x="17" y="-4.8" width="3.8" height="9.6" rx="1.2" fill="#52cc62"/><path d="M10.4 -1.6 H17" stroke="#8fe39a" stroke-width="1.1"/></g><g transform="translate(274.9 787.2) rotate(-45) scale(0.98)"><circle cx="0.4" cy="8" r="2.1" fill="#f0b02a" stroke="#c98714" stroke-width="0.5"/><path d="M-1.7 -10 a1.9 1.9 0 0 1 3.4 0 C6.6 -8.4 8.2 -2 9.6 5.2 H-9.6 C-8.2 -2 -6.6 -8.4 -1.7 -10 Z" fill="url(#gBell)" stroke="#d3921b" stroke-width="0.7"/><ellipse cx="0" cy="5.3" rx="9.6" ry="1.7" fill="#dc9a1e"/><path d="M-3 -7 C-5 -3.4 -5.6 0 -6.6 3.6" stroke="#fff2b8" stroke-width="1.5" fill="none" opacity="0.75"/><path d="M1.4 -6.6 C3.6 -3 4.6 0 5.6 3.4" stroke="#c9861a" stroke-width="1" fill="none" opacity="0.45"/></g><rect x="40.5" y="827.1" width="29.2" height="25.4" rx="2.2" fill="url(#gWinB)" stroke="#5f7fc2" stroke-width="1.1"/><path d="M41 833.9 V829.3 a1.8 1.8 0 0 1 1.8 -1.8 H67.4 a1.8 1.8 0 0 1 1.8 1.8 V833.9 Z" fill="url(#gWinT)"/><rect x="63.7" y="829.3" width="2.4" height="2.4" rx="0.6" fill="#e8402c"/><circle cx="38.8" cy="879.1" r="9.9" fill="#4b83bf"/><rect x="37.2" y="877.7" width="3.2" height="6.6" fill="#fff"/><circle cx="38.8" cy="875.1" r="1.7" fill="#fff"/><path d="M243.8 870.8 Q251.2 867 258.6 870.8 V885.8 Q251.2 889.8 243.8 885.8 Z" fill="url(#gDB)" stroke="#d9902f" stroke-width="0.7"/><ellipse cx="251.2" cy="870.9" rx="7.2" ry="2" fill="#fbe3a6" stroke="#e3a344" stroke-width="0.5"/><path d="M243.8 876.4 Q251.2 879.4 258.6 876.4 M243.8 881.8 Q251.2 884.8 258.6 881.8" fill="none" stroke="#c9741f" stroke-width="0.9" opacity="0.8"/><rect x="591.7" y="870.5" width="16.8" height="17" rx="1" fill="#ffffff" stroke="#6f88d2" stroke-width="1"/><path d="M591.7 874.6 V871.5 a1 1 0 0 1 1 -1 H607.5 a1 1 0 0 1 1 1 V874.6 Z" fill="#e2513f"/><rect x="592.2" y="885.6" width="15.8" height="1.6" fill="#8ea2e0"/><text x="600.1" y="884.7" font-family="Liberation Sans" font-weight="bold" font-size="11.5" text-anchor="middle" fill="#2f3848" letter-spacing="-0.5">31</text></svg>
<div id="frame"></div>
</body></html>
